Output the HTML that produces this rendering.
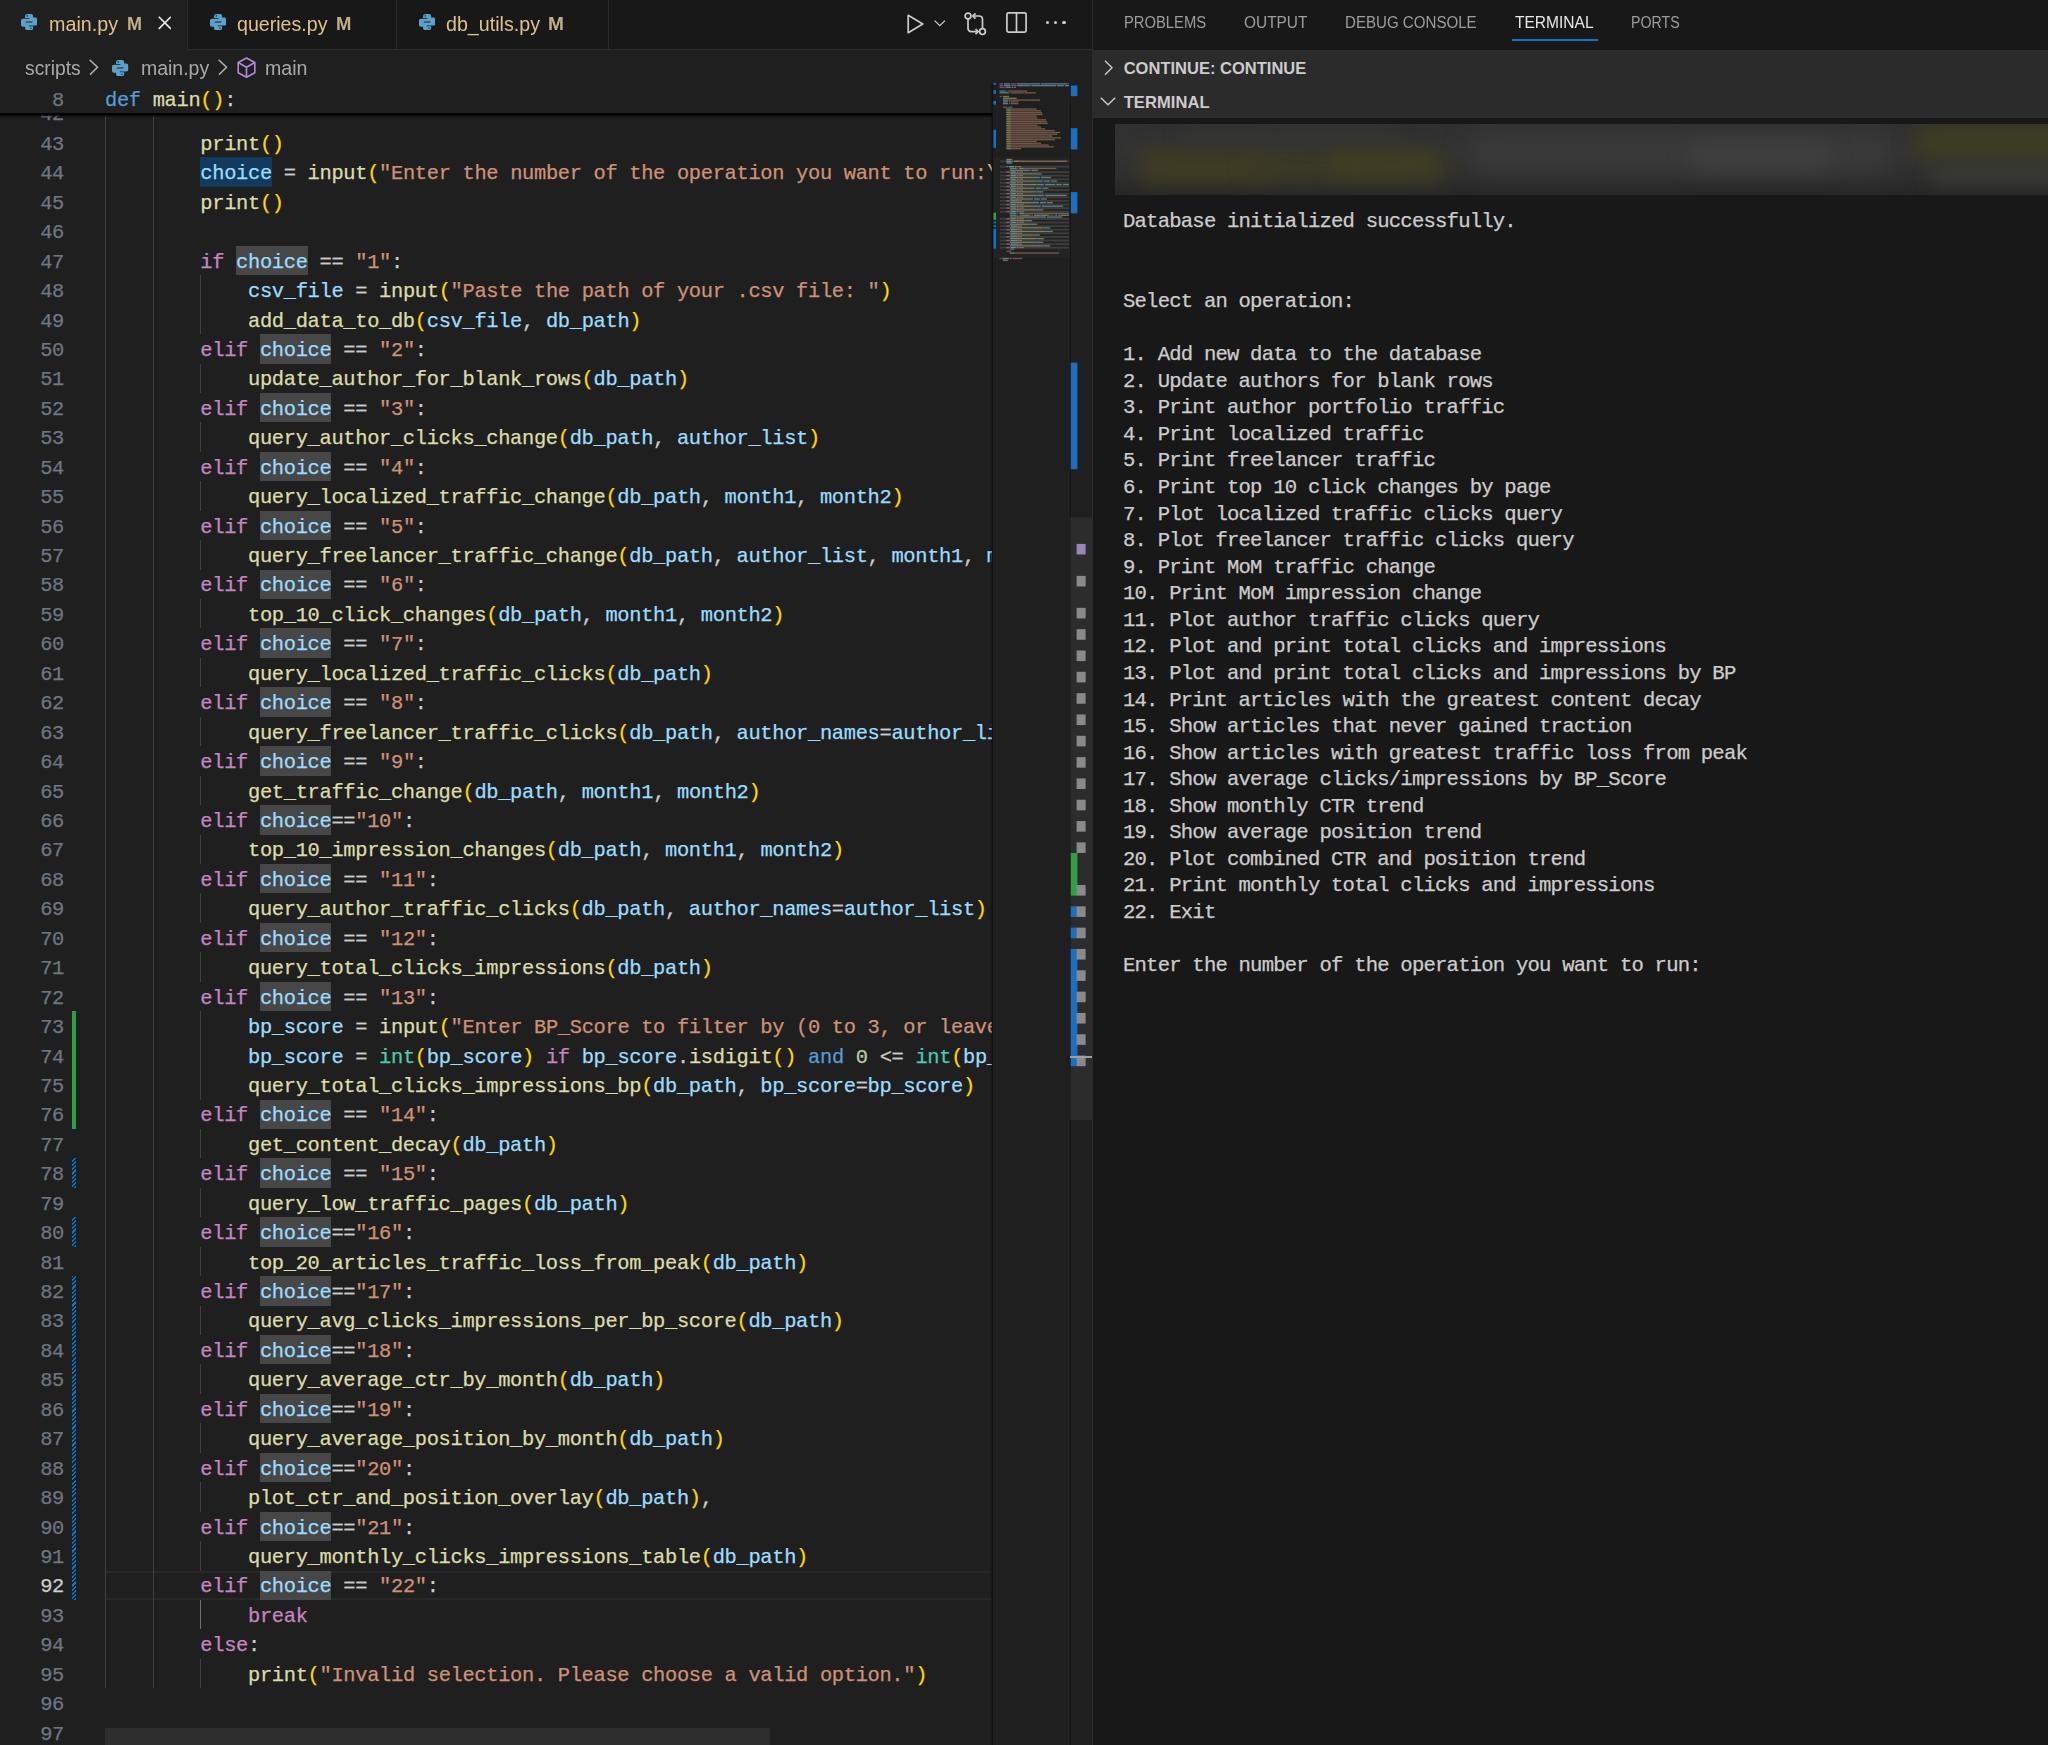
<!DOCTYPE html>
<html><head><meta charset="utf-8"><title>VS Code</title>
<style>html,body{margin:0;padding:0;background:#1f1f1f;}body{width:2048px;height:1745px;overflow:hidden;position:relative;font-family:'Liberation Sans',sans-serif;}.m{-webkit-text-stroke:0.25px currentColor}</style>
</head><body>
<div style="position:absolute;left:0.00px;top:0.00px;width:1092.00px;height:1745.00px;background:#1f1f1f;"></div>
<div style="position:absolute;left:0;top:84px;width:992px;height:1661px;overflow:hidden">
<div style="position:absolute;left:106.00px;top:1486.56px;width:886.00px;height:29.44px;background:transparent;box-sizing:border-box;border-top:2px solid #282828;border-bottom:2px solid #282828"></div>
<div style="position:absolute;left:200.36px;top:73.44px;width:71.52px;height:29.44px;background:#113a5c;"></div>
<div style="position:absolute;left:236.12px;top:161.76px;width:71.52px;height:29.44px;background:#474747;"></div>
<div style="position:absolute;left:259.96px;top:250.08px;width:71.52px;height:29.44px;background:#474747;"></div>
<div style="position:absolute;left:259.96px;top:308.96px;width:71.52px;height:29.44px;background:#474747;"></div>
<div style="position:absolute;left:259.96px;top:367.84px;width:71.52px;height:29.44px;background:#474747;"></div>
<div style="position:absolute;left:259.96px;top:426.72px;width:71.52px;height:29.44px;background:#474747;"></div>
<div style="position:absolute;left:259.96px;top:485.60px;width:71.52px;height:29.44px;background:#474747;"></div>
<div style="position:absolute;left:259.96px;top:544.48px;width:71.52px;height:29.44px;background:#474747;"></div>
<div style="position:absolute;left:259.96px;top:603.36px;width:71.52px;height:29.44px;background:#474747;"></div>
<div style="position:absolute;left:259.96px;top:662.24px;width:71.52px;height:29.44px;background:#474747;"></div>
<div style="position:absolute;left:259.96px;top:721.12px;width:71.52px;height:29.44px;background:#474747;"></div>
<div style="position:absolute;left:259.96px;top:780.00px;width:71.52px;height:29.44px;background:#474747;"></div>
<div style="position:absolute;left:259.96px;top:838.88px;width:71.52px;height:29.44px;background:#474747;"></div>
<div style="position:absolute;left:259.96px;top:897.76px;width:71.52px;height:29.44px;background:#474747;"></div>
<div style="position:absolute;left:259.96px;top:1015.52px;width:71.52px;height:29.44px;background:#474747;"></div>
<div style="position:absolute;left:259.96px;top:1074.40px;width:71.52px;height:29.44px;background:#474747;"></div>
<div style="position:absolute;left:259.96px;top:1133.28px;width:71.52px;height:29.44px;background:#474747;"></div>
<div style="position:absolute;left:259.96px;top:1192.16px;width:71.52px;height:29.44px;background:#474747;"></div>
<div style="position:absolute;left:259.96px;top:1251.04px;width:71.52px;height:29.44px;background:#474747;"></div>
<div style="position:absolute;left:259.96px;top:1309.92px;width:71.52px;height:29.44px;background:#474747;"></div>
<div style="position:absolute;left:259.96px;top:1368.80px;width:71.52px;height:29.44px;background:#474747;"></div>
<div style="position:absolute;left:259.96px;top:1427.68px;width:71.52px;height:29.44px;background:#474747;"></div>
<div style="position:absolute;left:259.96px;top:1486.56px;width:71.52px;height:29.44px;background:#474747;"></div>
<div style="position:absolute;left:105.00px;top:14.56px;width:1.00px;height:1589.76px;background:#404040;"></div>
<div style="position:absolute;left:152.68px;top:14.56px;width:1.00px;height:1589.76px;background:#404040;"></div>
<div style="position:absolute;left:200.36px;top:191.20px;width:1.00px;height:29.44px;background:#404040;"></div>
<div style="position:absolute;left:200.36px;top:220.64px;width:1.00px;height:29.44px;background:#404040;"></div>
<div style="position:absolute;left:200.36px;top:279.52px;width:1.00px;height:29.44px;background:#404040;"></div>
<div style="position:absolute;left:200.36px;top:338.40px;width:1.00px;height:29.44px;background:#404040;"></div>
<div style="position:absolute;left:200.36px;top:397.28px;width:1.00px;height:29.44px;background:#404040;"></div>
<div style="position:absolute;left:200.36px;top:456.16px;width:1.00px;height:29.44px;background:#404040;"></div>
<div style="position:absolute;left:200.36px;top:515.04px;width:1.00px;height:29.44px;background:#404040;"></div>
<div style="position:absolute;left:200.36px;top:573.92px;width:1.00px;height:29.44px;background:#404040;"></div>
<div style="position:absolute;left:200.36px;top:632.80px;width:1.00px;height:29.44px;background:#404040;"></div>
<div style="position:absolute;left:200.36px;top:691.68px;width:1.00px;height:29.44px;background:#404040;"></div>
<div style="position:absolute;left:200.36px;top:750.56px;width:1.00px;height:29.44px;background:#404040;"></div>
<div style="position:absolute;left:200.36px;top:809.44px;width:1.00px;height:29.44px;background:#404040;"></div>
<div style="position:absolute;left:200.36px;top:868.32px;width:1.00px;height:29.44px;background:#404040;"></div>
<div style="position:absolute;left:200.36px;top:927.20px;width:1.00px;height:29.44px;background:#404040;"></div>
<div style="position:absolute;left:200.36px;top:956.64px;width:1.00px;height:29.44px;background:#404040;"></div>
<div style="position:absolute;left:200.36px;top:986.08px;width:1.00px;height:29.44px;background:#404040;"></div>
<div style="position:absolute;left:200.36px;top:1044.96px;width:1.00px;height:29.44px;background:#404040;"></div>
<div style="position:absolute;left:200.36px;top:1103.84px;width:1.00px;height:29.44px;background:#404040;"></div>
<div style="position:absolute;left:200.36px;top:1162.72px;width:1.00px;height:29.44px;background:#404040;"></div>
<div style="position:absolute;left:200.36px;top:1221.60px;width:1.00px;height:29.44px;background:#404040;"></div>
<div style="position:absolute;left:200.36px;top:1280.48px;width:1.00px;height:29.44px;background:#404040;"></div>
<div style="position:absolute;left:200.36px;top:1339.36px;width:1.00px;height:29.44px;background:#404040;"></div>
<div style="position:absolute;left:200.36px;top:1398.24px;width:1.00px;height:29.44px;background:#404040;"></div>
<div style="position:absolute;left:200.36px;top:1457.12px;width:1.00px;height:29.44px;background:#404040;"></div>
<div style="position:absolute;left:200.36px;top:1516.00px;width:1.00px;height:29.44px;background:#707070;"></div>
<div style="position:absolute;left:200.36px;top:1574.88px;width:1.00px;height:29.44px;background:#404040;"></div>
<div class="m" style="position:absolute;left:0;width:64.00px;text-align:right;top:21.43px;font-family:'Liberation Mono';font-size:20.400px;line-height:20.400px;letter-spacing:-0.322px;color:#6e7681;white-space:pre">42</div>
<div class="m" style="position:absolute;left:0;width:64.00px;text-align:right;top:50.87px;font-family:'Liberation Mono';font-size:20.400px;line-height:20.400px;letter-spacing:-0.322px;color:#6e7681;white-space:pre">43</div>
<div class="m" style="position:absolute;left:105.00px;top:50.87px;font-family:'Liberation Mono';font-size:20.400px;line-height:20.400px;letter-spacing:-0.322px;color:#cccccc;white-space:pre">        <span style="color:#dcdcaa">print</span><span style="color:#ffd700">(</span><span style="color:#ffd700">)</span></div>
<div class="m" style="position:absolute;left:0;width:64.00px;text-align:right;top:80.31px;font-family:'Liberation Mono';font-size:20.400px;line-height:20.400px;letter-spacing:-0.322px;color:#6e7681;white-space:pre">44</div>
<div class="m" style="position:absolute;left:105.00px;top:80.31px;font-family:'Liberation Mono';font-size:20.400px;line-height:20.400px;letter-spacing:-0.322px;color:#cccccc;white-space:pre">        <span style="color:#9cdcfe">choice</span> <span style="color:#cccccc">=</span> <span style="color:#dcdcaa">input</span><span style="color:#ffd700">(</span><span style="color:#ce9178">&quot;Enter the number of the operation you want to run:</span><span style="color:#d7ba7d">\n</span><span style="color:#ce9178">&quot;</span><span style="color:#ffd700">)</span></div>
<div class="m" style="position:absolute;left:0;width:64.00px;text-align:right;top:109.75px;font-family:'Liberation Mono';font-size:20.400px;line-height:20.400px;letter-spacing:-0.322px;color:#6e7681;white-space:pre">45</div>
<div class="m" style="position:absolute;left:105.00px;top:109.75px;font-family:'Liberation Mono';font-size:20.400px;line-height:20.400px;letter-spacing:-0.322px;color:#cccccc;white-space:pre">        <span style="color:#dcdcaa">print</span><span style="color:#ffd700">(</span><span style="color:#ffd700">)</span></div>
<div class="m" style="position:absolute;left:0;width:64.00px;text-align:right;top:139.19px;font-family:'Liberation Mono';font-size:20.400px;line-height:20.400px;letter-spacing:-0.322px;color:#6e7681;white-space:pre">46</div>
<div class="m" style="position:absolute;left:0;width:64.00px;text-align:right;top:168.63px;font-family:'Liberation Mono';font-size:20.400px;line-height:20.400px;letter-spacing:-0.322px;color:#6e7681;white-space:pre">47</div>
<div class="m" style="position:absolute;left:105.00px;top:168.63px;font-family:'Liberation Mono';font-size:20.400px;line-height:20.400px;letter-spacing:-0.322px;color:#cccccc;white-space:pre">        <span style="color:#c586c0">if</span> <span style="color:#9cdcfe">choice</span> <span style="color:#cccccc">=</span><span style="color:#cccccc">=</span> <span style="color:#ce9178">&quot;1&quot;</span><span style="color:#cccccc">:</span></div>
<div class="m" style="position:absolute;left:0;width:64.00px;text-align:right;top:198.07px;font-family:'Liberation Mono';font-size:20.400px;line-height:20.400px;letter-spacing:-0.322px;color:#6e7681;white-space:pre">48</div>
<div class="m" style="position:absolute;left:105.00px;top:198.07px;font-family:'Liberation Mono';font-size:20.400px;line-height:20.400px;letter-spacing:-0.322px;color:#cccccc;white-space:pre">            <span style="color:#9cdcfe">csv_file</span> <span style="color:#cccccc">=</span> <span style="color:#dcdcaa">input</span><span style="color:#ffd700">(</span><span style="color:#ce9178">&quot;Paste the path of your .csv file: &quot;</span><span style="color:#ffd700">)</span></div>
<div class="m" style="position:absolute;left:0;width:64.00px;text-align:right;top:227.51px;font-family:'Liberation Mono';font-size:20.400px;line-height:20.400px;letter-spacing:-0.322px;color:#6e7681;white-space:pre">49</div>
<div class="m" style="position:absolute;left:105.00px;top:227.51px;font-family:'Liberation Mono';font-size:20.400px;line-height:20.400px;letter-spacing:-0.322px;color:#cccccc;white-space:pre">            <span style="color:#dcdcaa">add_data_to_db</span><span style="color:#ffd700">(</span><span style="color:#9cdcfe">csv_file</span><span style="color:#cccccc">,</span> <span style="color:#9cdcfe">db_path</span><span style="color:#ffd700">)</span></div>
<div class="m" style="position:absolute;left:0;width:64.00px;text-align:right;top:256.95px;font-family:'Liberation Mono';font-size:20.400px;line-height:20.400px;letter-spacing:-0.322px;color:#6e7681;white-space:pre">50</div>
<div class="m" style="position:absolute;left:105.00px;top:256.95px;font-family:'Liberation Mono';font-size:20.400px;line-height:20.400px;letter-spacing:-0.322px;color:#cccccc;white-space:pre">        <span style="color:#c586c0">elif</span> <span style="color:#9cdcfe">choice</span> <span style="color:#cccccc">=</span><span style="color:#cccccc">=</span> <span style="color:#ce9178">&quot;2&quot;</span><span style="color:#cccccc">:</span></div>
<div class="m" style="position:absolute;left:0;width:64.00px;text-align:right;top:286.39px;font-family:'Liberation Mono';font-size:20.400px;line-height:20.400px;letter-spacing:-0.322px;color:#6e7681;white-space:pre">51</div>
<div class="m" style="position:absolute;left:105.00px;top:286.39px;font-family:'Liberation Mono';font-size:20.400px;line-height:20.400px;letter-spacing:-0.322px;color:#cccccc;white-space:pre">            <span style="color:#dcdcaa">update_author_for_blank_rows</span><span style="color:#ffd700">(</span><span style="color:#9cdcfe">db_path</span><span style="color:#ffd700">)</span></div>
<div class="m" style="position:absolute;left:0;width:64.00px;text-align:right;top:315.83px;font-family:'Liberation Mono';font-size:20.400px;line-height:20.400px;letter-spacing:-0.322px;color:#6e7681;white-space:pre">52</div>
<div class="m" style="position:absolute;left:105.00px;top:315.83px;font-family:'Liberation Mono';font-size:20.400px;line-height:20.400px;letter-spacing:-0.322px;color:#cccccc;white-space:pre">        <span style="color:#c586c0">elif</span> <span style="color:#9cdcfe">choice</span> <span style="color:#cccccc">=</span><span style="color:#cccccc">=</span> <span style="color:#ce9178">&quot;3&quot;</span><span style="color:#cccccc">:</span></div>
<div class="m" style="position:absolute;left:0;width:64.00px;text-align:right;top:345.27px;font-family:'Liberation Mono';font-size:20.400px;line-height:20.400px;letter-spacing:-0.322px;color:#6e7681;white-space:pre">53</div>
<div class="m" style="position:absolute;left:105.00px;top:345.27px;font-family:'Liberation Mono';font-size:20.400px;line-height:20.400px;letter-spacing:-0.322px;color:#cccccc;white-space:pre">            <span style="color:#dcdcaa">query_author_clicks_change</span><span style="color:#ffd700">(</span><span style="color:#9cdcfe">db_path</span><span style="color:#cccccc">,</span> <span style="color:#9cdcfe">author_list</span><span style="color:#ffd700">)</span></div>
<div class="m" style="position:absolute;left:0;width:64.00px;text-align:right;top:374.71px;font-family:'Liberation Mono';font-size:20.400px;line-height:20.400px;letter-spacing:-0.322px;color:#6e7681;white-space:pre">54</div>
<div class="m" style="position:absolute;left:105.00px;top:374.71px;font-family:'Liberation Mono';font-size:20.400px;line-height:20.400px;letter-spacing:-0.322px;color:#cccccc;white-space:pre">        <span style="color:#c586c0">elif</span> <span style="color:#9cdcfe">choice</span> <span style="color:#cccccc">=</span><span style="color:#cccccc">=</span> <span style="color:#ce9178">&quot;4&quot;</span><span style="color:#cccccc">:</span></div>
<div class="m" style="position:absolute;left:0;width:64.00px;text-align:right;top:404.15px;font-family:'Liberation Mono';font-size:20.400px;line-height:20.400px;letter-spacing:-0.322px;color:#6e7681;white-space:pre">55</div>
<div class="m" style="position:absolute;left:105.00px;top:404.15px;font-family:'Liberation Mono';font-size:20.400px;line-height:20.400px;letter-spacing:-0.322px;color:#cccccc;white-space:pre">            <span style="color:#dcdcaa">query_localized_traffic_change</span><span style="color:#ffd700">(</span><span style="color:#9cdcfe">db_path</span><span style="color:#cccccc">,</span> <span style="color:#9cdcfe">month1</span><span style="color:#cccccc">,</span> <span style="color:#9cdcfe">month2</span><span style="color:#ffd700">)</span></div>
<div class="m" style="position:absolute;left:0;width:64.00px;text-align:right;top:433.59px;font-family:'Liberation Mono';font-size:20.400px;line-height:20.400px;letter-spacing:-0.322px;color:#6e7681;white-space:pre">56</div>
<div class="m" style="position:absolute;left:105.00px;top:433.59px;font-family:'Liberation Mono';font-size:20.400px;line-height:20.400px;letter-spacing:-0.322px;color:#cccccc;white-space:pre">        <span style="color:#c586c0">elif</span> <span style="color:#9cdcfe">choice</span> <span style="color:#cccccc">=</span><span style="color:#cccccc">=</span> <span style="color:#ce9178">&quot;5&quot;</span><span style="color:#cccccc">:</span></div>
<div class="m" style="position:absolute;left:0;width:64.00px;text-align:right;top:463.03px;font-family:'Liberation Mono';font-size:20.400px;line-height:20.400px;letter-spacing:-0.322px;color:#6e7681;white-space:pre">57</div>
<div class="m" style="position:absolute;left:105.00px;top:463.03px;font-family:'Liberation Mono';font-size:20.400px;line-height:20.400px;letter-spacing:-0.322px;color:#cccccc;white-space:pre">            <span style="color:#dcdcaa">query_freelancer_traffic_change</span><span style="color:#ffd700">(</span><span style="color:#9cdcfe">db_path</span><span style="color:#cccccc">,</span> <span style="color:#9cdcfe">author_list</span><span style="color:#cccccc">,</span> <span style="color:#9cdcfe">month1</span><span style="color:#cccccc">,</span> <span style="color:#9cdcfe">month2</span><span style="color:#ffd700">)</span></div>
<div class="m" style="position:absolute;left:0;width:64.00px;text-align:right;top:492.47px;font-family:'Liberation Mono';font-size:20.400px;line-height:20.400px;letter-spacing:-0.322px;color:#6e7681;white-space:pre">58</div>
<div class="m" style="position:absolute;left:105.00px;top:492.47px;font-family:'Liberation Mono';font-size:20.400px;line-height:20.400px;letter-spacing:-0.322px;color:#cccccc;white-space:pre">        <span style="color:#c586c0">elif</span> <span style="color:#9cdcfe">choice</span> <span style="color:#cccccc">=</span><span style="color:#cccccc">=</span> <span style="color:#ce9178">&quot;6&quot;</span><span style="color:#cccccc">:</span></div>
<div class="m" style="position:absolute;left:0;width:64.00px;text-align:right;top:521.91px;font-family:'Liberation Mono';font-size:20.400px;line-height:20.400px;letter-spacing:-0.322px;color:#6e7681;white-space:pre">59</div>
<div class="m" style="position:absolute;left:105.00px;top:521.91px;font-family:'Liberation Mono';font-size:20.400px;line-height:20.400px;letter-spacing:-0.322px;color:#cccccc;white-space:pre">            <span style="color:#dcdcaa">top_10_click_changes</span><span style="color:#ffd700">(</span><span style="color:#9cdcfe">db_path</span><span style="color:#cccccc">,</span> <span style="color:#9cdcfe">month1</span><span style="color:#cccccc">,</span> <span style="color:#9cdcfe">month2</span><span style="color:#ffd700">)</span></div>
<div class="m" style="position:absolute;left:0;width:64.00px;text-align:right;top:551.35px;font-family:'Liberation Mono';font-size:20.400px;line-height:20.400px;letter-spacing:-0.322px;color:#6e7681;white-space:pre">60</div>
<div class="m" style="position:absolute;left:105.00px;top:551.35px;font-family:'Liberation Mono';font-size:20.400px;line-height:20.400px;letter-spacing:-0.322px;color:#cccccc;white-space:pre">        <span style="color:#c586c0">elif</span> <span style="color:#9cdcfe">choice</span> <span style="color:#cccccc">=</span><span style="color:#cccccc">=</span> <span style="color:#ce9178">&quot;7&quot;</span><span style="color:#cccccc">:</span></div>
<div class="m" style="position:absolute;left:0;width:64.00px;text-align:right;top:580.79px;font-family:'Liberation Mono';font-size:20.400px;line-height:20.400px;letter-spacing:-0.322px;color:#6e7681;white-space:pre">61</div>
<div class="m" style="position:absolute;left:105.00px;top:580.79px;font-family:'Liberation Mono';font-size:20.400px;line-height:20.400px;letter-spacing:-0.322px;color:#cccccc;white-space:pre">            <span style="color:#dcdcaa">query_localized_traffic_clicks</span><span style="color:#ffd700">(</span><span style="color:#9cdcfe">db_path</span><span style="color:#ffd700">)</span></div>
<div class="m" style="position:absolute;left:0;width:64.00px;text-align:right;top:610.23px;font-family:'Liberation Mono';font-size:20.400px;line-height:20.400px;letter-spacing:-0.322px;color:#6e7681;white-space:pre">62</div>
<div class="m" style="position:absolute;left:105.00px;top:610.23px;font-family:'Liberation Mono';font-size:20.400px;line-height:20.400px;letter-spacing:-0.322px;color:#cccccc;white-space:pre">        <span style="color:#c586c0">elif</span> <span style="color:#9cdcfe">choice</span> <span style="color:#cccccc">=</span><span style="color:#cccccc">=</span> <span style="color:#ce9178">&quot;8&quot;</span><span style="color:#cccccc">:</span></div>
<div class="m" style="position:absolute;left:0;width:64.00px;text-align:right;top:639.67px;font-family:'Liberation Mono';font-size:20.400px;line-height:20.400px;letter-spacing:-0.322px;color:#6e7681;white-space:pre">63</div>
<div class="m" style="position:absolute;left:105.00px;top:639.67px;font-family:'Liberation Mono';font-size:20.400px;line-height:20.400px;letter-spacing:-0.322px;color:#cccccc;white-space:pre">            <span style="color:#dcdcaa">query_freelancer_traffic_clicks</span><span style="color:#ffd700">(</span><span style="color:#9cdcfe">db_path</span><span style="color:#cccccc">,</span> <span style="color:#9cdcfe">author_names</span><span style="color:#cccccc">=</span><span style="color:#9cdcfe">author_list</span><span style="color:#ffd700">)</span></div>
<div class="m" style="position:absolute;left:0;width:64.00px;text-align:right;top:669.11px;font-family:'Liberation Mono';font-size:20.400px;line-height:20.400px;letter-spacing:-0.322px;color:#6e7681;white-space:pre">64</div>
<div class="m" style="position:absolute;left:105.00px;top:669.11px;font-family:'Liberation Mono';font-size:20.400px;line-height:20.400px;letter-spacing:-0.322px;color:#cccccc;white-space:pre">        <span style="color:#c586c0">elif</span> <span style="color:#9cdcfe">choice</span> <span style="color:#cccccc">=</span><span style="color:#cccccc">=</span> <span style="color:#ce9178">&quot;9&quot;</span><span style="color:#cccccc">:</span></div>
<div class="m" style="position:absolute;left:0;width:64.00px;text-align:right;top:698.55px;font-family:'Liberation Mono';font-size:20.400px;line-height:20.400px;letter-spacing:-0.322px;color:#6e7681;white-space:pre">65</div>
<div class="m" style="position:absolute;left:105.00px;top:698.55px;font-family:'Liberation Mono';font-size:20.400px;line-height:20.400px;letter-spacing:-0.322px;color:#cccccc;white-space:pre">            <span style="color:#dcdcaa">get_traffic_change</span><span style="color:#ffd700">(</span><span style="color:#9cdcfe">db_path</span><span style="color:#cccccc">,</span> <span style="color:#9cdcfe">month1</span><span style="color:#cccccc">,</span> <span style="color:#9cdcfe">month2</span><span style="color:#ffd700">)</span></div>
<div class="m" style="position:absolute;left:0;width:64.00px;text-align:right;top:727.99px;font-family:'Liberation Mono';font-size:20.400px;line-height:20.400px;letter-spacing:-0.322px;color:#6e7681;white-space:pre">66</div>
<div class="m" style="position:absolute;left:105.00px;top:727.99px;font-family:'Liberation Mono';font-size:20.400px;line-height:20.400px;letter-spacing:-0.322px;color:#cccccc;white-space:pre">        <span style="color:#c586c0">elif</span> <span style="color:#9cdcfe">choice</span><span style="color:#cccccc">=</span><span style="color:#cccccc">=</span><span style="color:#ce9178">&quot;10&quot;</span><span style="color:#cccccc">:</span></div>
<div class="m" style="position:absolute;left:0;width:64.00px;text-align:right;top:757.43px;font-family:'Liberation Mono';font-size:20.400px;line-height:20.400px;letter-spacing:-0.322px;color:#6e7681;white-space:pre">67</div>
<div class="m" style="position:absolute;left:105.00px;top:757.43px;font-family:'Liberation Mono';font-size:20.400px;line-height:20.400px;letter-spacing:-0.322px;color:#cccccc;white-space:pre">            <span style="color:#dcdcaa">top_10_impression_changes</span><span style="color:#ffd700">(</span><span style="color:#9cdcfe">db_path</span><span style="color:#cccccc">,</span> <span style="color:#9cdcfe">month1</span><span style="color:#cccccc">,</span> <span style="color:#9cdcfe">month2</span><span style="color:#ffd700">)</span></div>
<div class="m" style="position:absolute;left:0;width:64.00px;text-align:right;top:786.87px;font-family:'Liberation Mono';font-size:20.400px;line-height:20.400px;letter-spacing:-0.322px;color:#6e7681;white-space:pre">68</div>
<div class="m" style="position:absolute;left:105.00px;top:786.87px;font-family:'Liberation Mono';font-size:20.400px;line-height:20.400px;letter-spacing:-0.322px;color:#cccccc;white-space:pre">        <span style="color:#c586c0">elif</span> <span style="color:#9cdcfe">choice</span> <span style="color:#cccccc">=</span><span style="color:#cccccc">=</span> <span style="color:#ce9178">&quot;11&quot;</span><span style="color:#cccccc">:</span></div>
<div class="m" style="position:absolute;left:0;width:64.00px;text-align:right;top:816.31px;font-family:'Liberation Mono';font-size:20.400px;line-height:20.400px;letter-spacing:-0.322px;color:#6e7681;white-space:pre">69</div>
<div class="m" style="position:absolute;left:105.00px;top:816.31px;font-family:'Liberation Mono';font-size:20.400px;line-height:20.400px;letter-spacing:-0.322px;color:#cccccc;white-space:pre">            <span style="color:#dcdcaa">query_author_traffic_clicks</span><span style="color:#ffd700">(</span><span style="color:#9cdcfe">db_path</span><span style="color:#cccccc">,</span> <span style="color:#9cdcfe">author_names</span><span style="color:#cccccc">=</span><span style="color:#9cdcfe">author_list</span><span style="color:#ffd700">)</span></div>
<div class="m" style="position:absolute;left:0;width:64.00px;text-align:right;top:845.75px;font-family:'Liberation Mono';font-size:20.400px;line-height:20.400px;letter-spacing:-0.322px;color:#6e7681;white-space:pre">70</div>
<div class="m" style="position:absolute;left:105.00px;top:845.75px;font-family:'Liberation Mono';font-size:20.400px;line-height:20.400px;letter-spacing:-0.322px;color:#cccccc;white-space:pre">        <span style="color:#c586c0">elif</span> <span style="color:#9cdcfe">choice</span> <span style="color:#cccccc">=</span><span style="color:#cccccc">=</span> <span style="color:#ce9178">&quot;12&quot;</span><span style="color:#cccccc">:</span></div>
<div class="m" style="position:absolute;left:0;width:64.00px;text-align:right;top:875.19px;font-family:'Liberation Mono';font-size:20.400px;line-height:20.400px;letter-spacing:-0.322px;color:#6e7681;white-space:pre">71</div>
<div class="m" style="position:absolute;left:105.00px;top:875.19px;font-family:'Liberation Mono';font-size:20.400px;line-height:20.400px;letter-spacing:-0.322px;color:#cccccc;white-space:pre">            <span style="color:#dcdcaa">query_total_clicks_impressions</span><span style="color:#ffd700">(</span><span style="color:#9cdcfe">db_path</span><span style="color:#ffd700">)</span></div>
<div class="m" style="position:absolute;left:0;width:64.00px;text-align:right;top:904.63px;font-family:'Liberation Mono';font-size:20.400px;line-height:20.400px;letter-spacing:-0.322px;color:#6e7681;white-space:pre">72</div>
<div class="m" style="position:absolute;left:105.00px;top:904.63px;font-family:'Liberation Mono';font-size:20.400px;line-height:20.400px;letter-spacing:-0.322px;color:#cccccc;white-space:pre">        <span style="color:#c586c0">elif</span> <span style="color:#9cdcfe">choice</span> <span style="color:#cccccc">=</span><span style="color:#cccccc">=</span> <span style="color:#ce9178">&quot;13&quot;</span><span style="color:#cccccc">:</span></div>
<div class="m" style="position:absolute;left:0;width:64.00px;text-align:right;top:934.07px;font-family:'Liberation Mono';font-size:20.400px;line-height:20.400px;letter-spacing:-0.322px;color:#6e7681;white-space:pre">73</div>
<div class="m" style="position:absolute;left:105.00px;top:934.07px;font-family:'Liberation Mono';font-size:20.400px;line-height:20.400px;letter-spacing:-0.322px;color:#cccccc;white-space:pre">            <span style="color:#9cdcfe">bp_score</span> <span style="color:#cccccc">=</span> <span style="color:#dcdcaa">input</span><span style="color:#ffd700">(</span><span style="color:#ce9178">&quot;Enter BP_Score to filter by (0 to 3, or leave blank for all): &quot;</span><span style="color:#ffd700">)</span></div>
<div class="m" style="position:absolute;left:0;width:64.00px;text-align:right;top:963.51px;font-family:'Liberation Mono';font-size:20.400px;line-height:20.400px;letter-spacing:-0.322px;color:#6e7681;white-space:pre">74</div>
<div class="m" style="position:absolute;left:105.00px;top:963.51px;font-family:'Liberation Mono';font-size:20.400px;line-height:20.400px;letter-spacing:-0.322px;color:#cccccc;white-space:pre">            <span style="color:#9cdcfe">bp_score</span> <span style="color:#cccccc">=</span> <span style="color:#4ec9b0">int</span><span style="color:#ffd700">(</span><span style="color:#9cdcfe">bp_score</span><span style="color:#ffd700">)</span> <span style="color:#c586c0">if</span> <span style="color:#9cdcfe">bp_score</span><span style="color:#cccccc">.</span><span style="color:#dcdcaa">isdigit</span><span style="color:#ffd700">(</span><span style="color:#ffd700">)</span> <span style="color:#569cd6">and</span> <span style="color:#b5cea8">0</span> <span style="color:#cccccc">&lt;</span><span style="color:#cccccc">=</span> <span style="color:#4ec9b0">int</span><span style="color:#ffd700">(</span><span style="color:#9cdcfe">bp_score</span><span style="color:#ffd700">)</span> <span style="color:#cccccc">&lt;</span><span style="color:#cccccc">=</span> <span style="color:#b5cea8">3</span> <span style="color:#c586c0">else</span> <span style="color:#569cd6">None</span></div>
<div class="m" style="position:absolute;left:0;width:64.00px;text-align:right;top:992.95px;font-family:'Liberation Mono';font-size:20.400px;line-height:20.400px;letter-spacing:-0.322px;color:#6e7681;white-space:pre">75</div>
<div class="m" style="position:absolute;left:105.00px;top:992.95px;font-family:'Liberation Mono';font-size:20.400px;line-height:20.400px;letter-spacing:-0.322px;color:#cccccc;white-space:pre">            <span style="color:#dcdcaa">query_total_clicks_impressions_bp</span><span style="color:#ffd700">(</span><span style="color:#9cdcfe">db_path</span><span style="color:#cccccc">,</span> <span style="color:#9cdcfe">bp_score</span><span style="color:#cccccc">=</span><span style="color:#9cdcfe">bp_score</span><span style="color:#ffd700">)</span></div>
<div class="m" style="position:absolute;left:0;width:64.00px;text-align:right;top:1022.39px;font-family:'Liberation Mono';font-size:20.400px;line-height:20.400px;letter-spacing:-0.322px;color:#6e7681;white-space:pre">76</div>
<div class="m" style="position:absolute;left:105.00px;top:1022.39px;font-family:'Liberation Mono';font-size:20.400px;line-height:20.400px;letter-spacing:-0.322px;color:#cccccc;white-space:pre">        <span style="color:#c586c0">elif</span> <span style="color:#9cdcfe">choice</span> <span style="color:#cccccc">=</span><span style="color:#cccccc">=</span> <span style="color:#ce9178">&quot;14&quot;</span><span style="color:#cccccc">:</span></div>
<div class="m" style="position:absolute;left:0;width:64.00px;text-align:right;top:1051.83px;font-family:'Liberation Mono';font-size:20.400px;line-height:20.400px;letter-spacing:-0.322px;color:#6e7681;white-space:pre">77</div>
<div class="m" style="position:absolute;left:105.00px;top:1051.83px;font-family:'Liberation Mono';font-size:20.400px;line-height:20.400px;letter-spacing:-0.322px;color:#cccccc;white-space:pre">            <span style="color:#dcdcaa">get_content_decay</span><span style="color:#ffd700">(</span><span style="color:#9cdcfe">db_path</span><span style="color:#ffd700">)</span></div>
<div class="m" style="position:absolute;left:0;width:64.00px;text-align:right;top:1081.27px;font-family:'Liberation Mono';font-size:20.400px;line-height:20.400px;letter-spacing:-0.322px;color:#6e7681;white-space:pre">78</div>
<div class="m" style="position:absolute;left:105.00px;top:1081.27px;font-family:'Liberation Mono';font-size:20.400px;line-height:20.400px;letter-spacing:-0.322px;color:#cccccc;white-space:pre">        <span style="color:#c586c0">elif</span> <span style="color:#9cdcfe">choice</span> <span style="color:#cccccc">=</span><span style="color:#cccccc">=</span> <span style="color:#ce9178">&quot;15&quot;</span><span style="color:#cccccc">:</span></div>
<div class="m" style="position:absolute;left:0;width:64.00px;text-align:right;top:1110.71px;font-family:'Liberation Mono';font-size:20.400px;line-height:20.400px;letter-spacing:-0.322px;color:#6e7681;white-space:pre">79</div>
<div class="m" style="position:absolute;left:105.00px;top:1110.71px;font-family:'Liberation Mono';font-size:20.400px;line-height:20.400px;letter-spacing:-0.322px;color:#cccccc;white-space:pre">            <span style="color:#dcdcaa">query_low_traffic_pages</span><span style="color:#ffd700">(</span><span style="color:#9cdcfe">db_path</span><span style="color:#ffd700">)</span></div>
<div class="m" style="position:absolute;left:0;width:64.00px;text-align:right;top:1140.15px;font-family:'Liberation Mono';font-size:20.400px;line-height:20.400px;letter-spacing:-0.322px;color:#6e7681;white-space:pre">80</div>
<div class="m" style="position:absolute;left:105.00px;top:1140.15px;font-family:'Liberation Mono';font-size:20.400px;line-height:20.400px;letter-spacing:-0.322px;color:#cccccc;white-space:pre">        <span style="color:#c586c0">elif</span> <span style="color:#9cdcfe">choice</span><span style="color:#cccccc">=</span><span style="color:#cccccc">=</span><span style="color:#ce9178">&quot;16&quot;</span><span style="color:#cccccc">:</span></div>
<div class="m" style="position:absolute;left:0;width:64.00px;text-align:right;top:1169.59px;font-family:'Liberation Mono';font-size:20.400px;line-height:20.400px;letter-spacing:-0.322px;color:#6e7681;white-space:pre">81</div>
<div class="m" style="position:absolute;left:105.00px;top:1169.59px;font-family:'Liberation Mono';font-size:20.400px;line-height:20.400px;letter-spacing:-0.322px;color:#cccccc;white-space:pre">            <span style="color:#dcdcaa">top_20_articles_traffic_loss_from_peak</span><span style="color:#ffd700">(</span><span style="color:#9cdcfe">db_path</span><span style="color:#ffd700">)</span></div>
<div class="m" style="position:absolute;left:0;width:64.00px;text-align:right;top:1199.03px;font-family:'Liberation Mono';font-size:20.400px;line-height:20.400px;letter-spacing:-0.322px;color:#6e7681;white-space:pre">82</div>
<div class="m" style="position:absolute;left:105.00px;top:1199.03px;font-family:'Liberation Mono';font-size:20.400px;line-height:20.400px;letter-spacing:-0.322px;color:#cccccc;white-space:pre">        <span style="color:#c586c0">elif</span> <span style="color:#9cdcfe">choice</span><span style="color:#cccccc">=</span><span style="color:#cccccc">=</span><span style="color:#ce9178">&quot;17&quot;</span><span style="color:#cccccc">:</span></div>
<div class="m" style="position:absolute;left:0;width:64.00px;text-align:right;top:1228.47px;font-family:'Liberation Mono';font-size:20.400px;line-height:20.400px;letter-spacing:-0.322px;color:#6e7681;white-space:pre">83</div>
<div class="m" style="position:absolute;left:105.00px;top:1228.47px;font-family:'Liberation Mono';font-size:20.400px;line-height:20.400px;letter-spacing:-0.322px;color:#cccccc;white-space:pre">            <span style="color:#dcdcaa">query_avg_clicks_impressions_per_bp_score</span><span style="color:#ffd700">(</span><span style="color:#9cdcfe">db_path</span><span style="color:#ffd700">)</span></div>
<div class="m" style="position:absolute;left:0;width:64.00px;text-align:right;top:1257.91px;font-family:'Liberation Mono';font-size:20.400px;line-height:20.400px;letter-spacing:-0.322px;color:#6e7681;white-space:pre">84</div>
<div class="m" style="position:absolute;left:105.00px;top:1257.91px;font-family:'Liberation Mono';font-size:20.400px;line-height:20.400px;letter-spacing:-0.322px;color:#cccccc;white-space:pre">        <span style="color:#c586c0">elif</span> <span style="color:#9cdcfe">choice</span><span style="color:#cccccc">=</span><span style="color:#cccccc">=</span><span style="color:#ce9178">&quot;18&quot;</span><span style="color:#cccccc">:</span></div>
<div class="m" style="position:absolute;left:0;width:64.00px;text-align:right;top:1287.35px;font-family:'Liberation Mono';font-size:20.400px;line-height:20.400px;letter-spacing:-0.322px;color:#6e7681;white-space:pre">85</div>
<div class="m" style="position:absolute;left:105.00px;top:1287.35px;font-family:'Liberation Mono';font-size:20.400px;line-height:20.400px;letter-spacing:-0.322px;color:#cccccc;white-space:pre">            <span style="color:#dcdcaa">query_average_ctr_by_month</span><span style="color:#ffd700">(</span><span style="color:#9cdcfe">db_path</span><span style="color:#ffd700">)</span></div>
<div class="m" style="position:absolute;left:0;width:64.00px;text-align:right;top:1316.79px;font-family:'Liberation Mono';font-size:20.400px;line-height:20.400px;letter-spacing:-0.322px;color:#6e7681;white-space:pre">86</div>
<div class="m" style="position:absolute;left:105.00px;top:1316.79px;font-family:'Liberation Mono';font-size:20.400px;line-height:20.400px;letter-spacing:-0.322px;color:#cccccc;white-space:pre">        <span style="color:#c586c0">elif</span> <span style="color:#9cdcfe">choice</span><span style="color:#cccccc">=</span><span style="color:#cccccc">=</span><span style="color:#ce9178">&quot;19&quot;</span><span style="color:#cccccc">:</span></div>
<div class="m" style="position:absolute;left:0;width:64.00px;text-align:right;top:1346.23px;font-family:'Liberation Mono';font-size:20.400px;line-height:20.400px;letter-spacing:-0.322px;color:#6e7681;white-space:pre">87</div>
<div class="m" style="position:absolute;left:105.00px;top:1346.23px;font-family:'Liberation Mono';font-size:20.400px;line-height:20.400px;letter-spacing:-0.322px;color:#cccccc;white-space:pre">            <span style="color:#dcdcaa">query_average_position_by_month</span><span style="color:#ffd700">(</span><span style="color:#9cdcfe">db_path</span><span style="color:#ffd700">)</span></div>
<div class="m" style="position:absolute;left:0;width:64.00px;text-align:right;top:1375.67px;font-family:'Liberation Mono';font-size:20.400px;line-height:20.400px;letter-spacing:-0.322px;color:#6e7681;white-space:pre">88</div>
<div class="m" style="position:absolute;left:105.00px;top:1375.67px;font-family:'Liberation Mono';font-size:20.400px;line-height:20.400px;letter-spacing:-0.322px;color:#cccccc;white-space:pre">        <span style="color:#c586c0">elif</span> <span style="color:#9cdcfe">choice</span><span style="color:#cccccc">=</span><span style="color:#cccccc">=</span><span style="color:#ce9178">&quot;20&quot;</span><span style="color:#cccccc">:</span></div>
<div class="m" style="position:absolute;left:0;width:64.00px;text-align:right;top:1405.11px;font-family:'Liberation Mono';font-size:20.400px;line-height:20.400px;letter-spacing:-0.322px;color:#6e7681;white-space:pre">89</div>
<div class="m" style="position:absolute;left:105.00px;top:1405.11px;font-family:'Liberation Mono';font-size:20.400px;line-height:20.400px;letter-spacing:-0.322px;color:#cccccc;white-space:pre">            <span style="color:#dcdcaa">plot_ctr_and_position_overlay</span><span style="color:#ffd700">(</span><span style="color:#9cdcfe">db_path</span><span style="color:#ffd700">)</span><span style="color:#cccccc">,</span></div>
<div class="m" style="position:absolute;left:0;width:64.00px;text-align:right;top:1434.55px;font-family:'Liberation Mono';font-size:20.400px;line-height:20.400px;letter-spacing:-0.322px;color:#6e7681;white-space:pre">90</div>
<div class="m" style="position:absolute;left:105.00px;top:1434.55px;font-family:'Liberation Mono';font-size:20.400px;line-height:20.400px;letter-spacing:-0.322px;color:#cccccc;white-space:pre">        <span style="color:#c586c0">elif</span> <span style="color:#9cdcfe">choice</span><span style="color:#cccccc">=</span><span style="color:#cccccc">=</span><span style="color:#ce9178">&quot;21&quot;</span><span style="color:#cccccc">:</span></div>
<div class="m" style="position:absolute;left:0;width:64.00px;text-align:right;top:1463.99px;font-family:'Liberation Mono';font-size:20.400px;line-height:20.400px;letter-spacing:-0.322px;color:#6e7681;white-space:pre">91</div>
<div class="m" style="position:absolute;left:105.00px;top:1463.99px;font-family:'Liberation Mono';font-size:20.400px;line-height:20.400px;letter-spacing:-0.322px;color:#cccccc;white-space:pre">            <span style="color:#dcdcaa">query_monthly_clicks_impressions_table</span><span style="color:#ffd700">(</span><span style="color:#9cdcfe">db_path</span><span style="color:#ffd700">)</span></div>
<div class="m" style="position:absolute;left:0;width:64.00px;text-align:right;top:1493.43px;font-family:'Liberation Mono';font-size:20.400px;line-height:20.400px;letter-spacing:-0.322px;color:#cccccc;white-space:pre">92</div>
<div class="m" style="position:absolute;left:105.00px;top:1493.43px;font-family:'Liberation Mono';font-size:20.400px;line-height:20.400px;letter-spacing:-0.322px;color:#cccccc;white-space:pre">        <span style="color:#c586c0">elif</span> <span style="color:#9cdcfe">choice</span> <span style="color:#cccccc">=</span><span style="color:#cccccc">=</span> <span style="color:#ce9178">&quot;22&quot;</span><span style="color:#cccccc">:</span></div>
<div class="m" style="position:absolute;left:0;width:64.00px;text-align:right;top:1522.87px;font-family:'Liberation Mono';font-size:20.400px;line-height:20.400px;letter-spacing:-0.322px;color:#6e7681;white-space:pre">93</div>
<div class="m" style="position:absolute;left:105.00px;top:1522.87px;font-family:'Liberation Mono';font-size:20.400px;line-height:20.400px;letter-spacing:-0.322px;color:#cccccc;white-space:pre">            <span style="color:#c586c0">break</span></div>
<div class="m" style="position:absolute;left:0;width:64.00px;text-align:right;top:1552.31px;font-family:'Liberation Mono';font-size:20.400px;line-height:20.400px;letter-spacing:-0.322px;color:#6e7681;white-space:pre">94</div>
<div class="m" style="position:absolute;left:105.00px;top:1552.31px;font-family:'Liberation Mono';font-size:20.400px;line-height:20.400px;letter-spacing:-0.322px;color:#cccccc;white-space:pre">        <span style="color:#c586c0">else</span><span style="color:#cccccc">:</span></div>
<div class="m" style="position:absolute;left:0;width:64.00px;text-align:right;top:1581.75px;font-family:'Liberation Mono';font-size:20.400px;line-height:20.400px;letter-spacing:-0.322px;color:#6e7681;white-space:pre">95</div>
<div class="m" style="position:absolute;left:105.00px;top:1581.75px;font-family:'Liberation Mono';font-size:20.400px;line-height:20.400px;letter-spacing:-0.322px;color:#cccccc;white-space:pre">            <span style="color:#dcdcaa">print</span><span style="color:#ffd700">(</span><span style="color:#ce9178">&quot;Invalid selection. Please choose a valid option.&quot;</span><span style="color:#ffd700">)</span></div>
<div class="m" style="position:absolute;left:0;width:64.00px;text-align:right;top:1611.19px;font-family:'Liberation Mono';font-size:20.400px;line-height:20.400px;letter-spacing:-0.322px;color:#6e7681;white-space:pre">96</div>
<div class="m" style="position:absolute;left:0;width:64.00px;text-align:right;top:1640.63px;font-family:'Liberation Mono';font-size:20.400px;line-height:20.400px;letter-spacing:-0.322px;color:#6e7681;white-space:pre">97</div>
<div style="position:absolute;left:72.00px;top:927.20px;width:4.00px;height:117.76px;background:#2ea043;"></div>
<div style="position:absolute;left:72px;top:1074.40px;width:4px;height:29.44px;background:repeating-linear-gradient(-45deg,#0078d4 0px,#0078d4 1.5px,transparent 1.5px,transparent 3px)"></div>
<div style="position:absolute;left:72px;top:1133.28px;width:4px;height:29.44px;background:repeating-linear-gradient(-45deg,#0078d4 0px,#0078d4 1.5px,transparent 1.5px,transparent 3px)"></div>
<div style="position:absolute;left:72px;top:1192.16px;width:4px;height:323.84px;background:repeating-linear-gradient(-45deg,#0078d4 0px,#0078d4 1.5px,transparent 1.5px,transparent 3px)"></div>
<div style="position:absolute;left:105.00px;top:1644.00px;width:665.00px;height:17.00px;background:#2e2e2e;"></div>
</div>
<div style="position:absolute;left:0.00px;top:84.00px;width:992.00px;height:29.44px;background:#1f1f1f;"></div>
<div style="position:absolute;left:0;top:112.84px;width:992px;height:5px;background:linear-gradient(#000000,#000000 35%,rgba(0,0,0,0.35) 65%,rgba(0,0,0,0))"></div>
<div class="m" style="position:absolute;left:0;width:64.00px;text-align:right;top:90.87px;font-family:'Liberation Mono';font-size:20.400px;line-height:20.400px;letter-spacing:-0.322px;color:#6e7681">8</div>
<div class="m" style="position:absolute;left:105.00px;top:90.87px;font-family:'Liberation Mono';font-size:20.400px;line-height:20.400px;letter-spacing:-0.322px;color:#cccccc;white-space:pre"><span style="color:#569cd6">def</span> <span style="color:#dcdcaa">main</span><span style="color:#ffd700">(</span><span style="color:#ffd700">)</span><span style="color:#cccccc">:</span></div>
<div style="position:absolute;left:0.00px;top:49.00px;width:992.00px;height:35.00px;background:#1f1f1f;"></div>
<div style="position:absolute;left:24.50px;top:57.54px;font-family:'Liberation Sans';font-weight:normal;font-size:20.50px;line-height:20.50px;letter-spacing:0.000px;color:#a9a9a9;white-space:pre;transform:scaleX(0.9405);transform-origin:0 0;">scripts</div>
<div style="position:absolute;left:140.90px;top:57.54px;font-family:'Liberation Sans';font-weight:normal;font-size:20.50px;line-height:20.50px;letter-spacing:0.000px;color:#a9a9a9;white-space:pre;transform:scaleX(0.9489);transform-origin:0 0;">main.py</div>
<div style="position:absolute;left:264.60px;top:57.54px;font-family:'Liberation Sans';font-weight:normal;font-size:20.50px;line-height:20.50px;letter-spacing:0.000px;color:#a9a9a9;white-space:pre;transform:scaleX(0.9563);transform-origin:0 0;">main</div>
<div style="position:absolute;left:0.00px;top:0.00px;width:1092.00px;height:50.40px;background:#181818;"></div>
<div style="position:absolute;left:0.00px;top:49.10px;width:1092.00px;height:1.40px;background:#2b2b2b;"></div>
<div style="position:absolute;left:0.00px;top:0.00px;width:187.00px;height:50.50px;background:#1f1f1f;"></div>
<div style="position:absolute;left:186.80px;top:0.00px;width:1.30px;height:49.50px;background:#2b2b2b;"></div>
<div style="position:absolute;left:396.00px;top:0.00px;width:1.30px;height:49.50px;background:#2b2b2b;"></div>
<div style="position:absolute;left:608.00px;top:0.00px;width:1.30px;height:49.50px;background:#2b2b2b;"></div>
<div style="position:absolute;left:49.00px;top:13.64px;font-family:'Liberation Sans';font-weight:normal;font-size:20.50px;line-height:20.50px;letter-spacing:0.000px;color:#e2c08d;white-space:pre;transform:scaleX(0.9614);transform-origin:0 0;">main.py</div>
<div style="position:absolute;left:127.00px;top:15.25px;font-family:'Liberation Sans';font-weight:bold;font-size:18.60px;line-height:18.60px;letter-spacing:0.000px;color:#c4ae88;white-space:pre;transform:scaleX(0.9681);transform-origin:0 0;">M</div>
<div style="position:absolute;left:237.20px;top:13.64px;font-family:'Liberation Sans';font-weight:normal;font-size:20.50px;line-height:20.50px;letter-spacing:0.000px;color:#e2c08d;white-space:pre;transform:scaleX(0.9568);transform-origin:0 0;">queries.py</div>
<div style="position:absolute;left:336.00px;top:15.25px;font-family:'Liberation Sans';font-weight:bold;font-size:18.60px;line-height:18.60px;letter-spacing:0.000px;color:#c4ae88;white-space:pre;transform:scaleX(0.9939);transform-origin:0 0;">M</div>
<div style="position:absolute;left:446.10px;top:13.64px;font-family:'Liberation Sans';font-weight:normal;font-size:20.50px;line-height:20.50px;letter-spacing:0.000px;color:#e2c08d;white-space:pre;transform:scaleX(0.9591);transform-origin:0 0;">db_utils.py</div>
<div style="position:absolute;left:548.40px;top:15.25px;font-family:'Liberation Sans';font-weight:bold;font-size:18.60px;line-height:18.60px;letter-spacing:0.000px;color:#c4ae88;white-space:pre;transform:scaleX(1.0262);transform-origin:0 0;">M</div>
<div style="position:absolute;left:989.5px;top:84px;width:3px;height:1661px;background:linear-gradient(90deg,rgba(0,0,0,0),rgba(0,0,0,0.55))"></div>
<svg style="position:absolute;left:0;top:0;width:2048px;height:1745px;pointer-events:none;filter:blur(0.35px)" viewBox="0 0 2048 1745"><rect x="994" y="156.80" width="76" height="100.80" fill="#ffffff" fill-opacity="0.02"/><rect x="1000" y="160.40" width="69" height="1.80" fill="#ffffff" fill-opacity="0.12"/><rect x="1000" y="165.80" width="69" height="1.80" fill="#ffffff" fill-opacity="0.12"/><rect x="1000" y="171.20" width="69" height="1.80" fill="#ffffff" fill-opacity="0.12"/><rect x="1000" y="174.80" width="69" height="1.80" fill="#ffffff" fill-opacity="0.12"/><rect x="1000" y="178.40" width="69" height="1.80" fill="#ffffff" fill-opacity="0.12"/><rect x="1000" y="182.00" width="69" height="1.80" fill="#ffffff" fill-opacity="0.12"/><rect x="1000" y="185.60" width="69" height="1.80" fill="#ffffff" fill-opacity="0.12"/><rect x="1000" y="189.20" width="69" height="1.80" fill="#ffffff" fill-opacity="0.12"/><rect x="1000" y="192.80" width="69" height="1.80" fill="#ffffff" fill-opacity="0.12"/><rect x="1000" y="196.40" width="69" height="1.80" fill="#ffffff" fill-opacity="0.12"/><rect x="1000" y="200.00" width="69" height="1.80" fill="#ffffff" fill-opacity="0.12"/><rect x="1000" y="203.60" width="69" height="1.80" fill="#ffffff" fill-opacity="0.12"/><rect x="1000" y="207.20" width="69" height="1.80" fill="#ffffff" fill-opacity="0.12"/><rect x="1000" y="210.80" width="69" height="1.80" fill="#ffffff" fill-opacity="0.12"/><rect x="1000" y="218.00" width="69" height="1.80" fill="#ffffff" fill-opacity="0.12"/><rect x="1000" y="221.60" width="69" height="1.80" fill="#ffffff" fill-opacity="0.12"/><rect x="1000" y="225.20" width="69" height="1.80" fill="#ffffff" fill-opacity="0.12"/><rect x="1000" y="228.80" width="69" height="1.80" fill="#ffffff" fill-opacity="0.12"/><rect x="1000" y="232.40" width="69" height="1.80" fill="#ffffff" fill-opacity="0.12"/><rect x="1000" y="236.00" width="69" height="1.80" fill="#ffffff" fill-opacity="0.12"/><rect x="1000" y="239.60" width="69" height="1.80" fill="#ffffff" fill-opacity="0.12"/><rect x="1000" y="243.20" width="69" height="1.80" fill="#ffffff" fill-opacity="0.12"/><rect x="1000" y="246.80" width="69" height="1.80" fill="#ffffff" fill-opacity="0.12"/><rect x="999.50" y="83.20" width="3.44" height="1.3" fill="#c586c0" fill-opacity="0.5"/><rect x="1003.80" y="83.20" width="6.02" height="1.3" fill="#9cdcfe" fill-opacity="0.5"/><rect x="1010.68" y="83.20" width="5.16" height="1.3" fill="#c586c0" fill-opacity="0.5"/><rect x="1016.70" y="83.20" width="22.36" height="1.3" fill="#9cdcfe" fill-opacity="0.5"/><rect x="1039.06" y="83.20" width="0.86" height="1.3" fill="#cccccc" fill-opacity="0.5"/><rect x="1040.78" y="83.20" width="25.80" height="1.3" fill="#9cdcfe" fill-opacity="0.5"/><rect x="1066.58" y="83.20" width="0.86" height="1.3" fill="#cccccc" fill-opacity="0.5"/><rect x="1068.30" y="83.20" width="0.70" height="1.3" fill="#9cdcfe" fill-opacity="0.5"/><rect x="999.50" y="85.00" width="3.44" height="1.3" fill="#c586c0" fill-opacity="0.5"/><rect x="1003.80" y="85.00" width="6.88" height="1.3" fill="#9cdcfe" fill-opacity="0.5"/><rect x="1011.54" y="85.00" width="5.16" height="1.3" fill="#c586c0" fill-opacity="0.5"/><rect x="1017.56" y="85.00" width="12.04" height="1.3" fill="#9cdcfe" fill-opacity="0.5"/><rect x="1029.60" y="85.00" width="0.86" height="1.3" fill="#cccccc" fill-opacity="0.5"/><rect x="1031.32" y="85.00" width="24.08" height="1.3" fill="#9cdcfe" fill-opacity="0.5"/><rect x="1055.40" y="85.00" width="0.86" height="1.3" fill="#cccccc" fill-opacity="0.5"/><rect x="1057.12" y="85.00" width="6.02" height="1.3" fill="#9cdcfe" fill-opacity="0.5"/><rect x="1063.14" y="85.00" width="0.86" height="1.3" fill="#cccccc" fill-opacity="0.5"/><rect x="1064.86" y="85.00" width="4.14" height="1.3" fill="#9cdcfe" fill-opacity="0.5"/><rect x="999.50" y="86.80" width="5.16" height="1.3" fill="#c586c0" fill-opacity="0.5"/><rect x="1005.52" y="86.80" width="5.16" height="1.3" fill="#9cdcfe" fill-opacity="0.5"/><rect x="1011.54" y="86.80" width="1.72" height="1.3" fill="#9cdcfe" fill-opacity="0.5"/><rect x="1014.12" y="86.80" width="1.72" height="1.3" fill="#9cdcfe" fill-opacity="0.5"/><rect x="999.50" y="90.40" width="6.02" height="1.3" fill="#9cdcfe" fill-opacity="0.5"/><rect x="1006.38" y="90.40" width="0.86" height="1.3" fill="#cccccc" fill-opacity="0.5"/><rect x="1008.10" y="90.40" width="18.92" height="1.3" fill="#ce9178" fill-opacity="0.5"/><rect x="999.50" y="92.20" width="9.46" height="1.3" fill="#9cdcfe" fill-opacity="0.5"/><rect x="1009.82" y="92.20" width="0.86" height="1.3" fill="#cccccc" fill-opacity="0.5"/><rect x="1011.54" y="92.20" width="0.86" height="1.3" fill="#ffd700" fill-opacity="0.5"/><rect x="1012.40" y="92.20" width="10.32" height="1.3" fill="#ce9178" fill-opacity="0.5"/><rect x="1022.72" y="92.20" width="0.86" height="1.3" fill="#cccccc" fill-opacity="0.5"/><rect x="1024.44" y="92.20" width="10.32" height="1.3" fill="#ce9178" fill-opacity="0.5"/><rect x="1034.76" y="92.20" width="0.86" height="1.3" fill="#ffd700" fill-opacity="0.5"/><rect x="999.50" y="95.80" width="2.58" height="1.3" fill="#569cd6" fill-opacity="0.5"/><rect x="1002.94" y="95.80" width="3.44" height="1.3" fill="#dcdcaa" fill-opacity="0.5"/><rect x="1006.38" y="95.80" width="0.86" height="1.3" fill="#ffd700" fill-opacity="0.5"/><rect x="1007.24" y="95.80" width="0.86" height="1.3" fill="#ffd700" fill-opacity="0.5"/><rect x="1008.10" y="95.80" width="0.86" height="1.3" fill="#cccccc" fill-opacity="0.5"/><rect x="1002.94" y="97.60" width="6.02" height="1.3" fill="#dcdcaa" fill-opacity="0.5"/><rect x="1008.96" y="97.60" width="0.86" height="1.3" fill="#ffd700" fill-opacity="0.5"/><rect x="1009.82" y="97.60" width="6.02" height="1.3" fill="#9cdcfe" fill-opacity="0.5"/><rect x="1015.84" y="97.60" width="0.86" height="1.3" fill="#ffd700" fill-opacity="0.5"/><rect x="1002.94" y="99.40" width="4.30" height="1.3" fill="#dcdcaa" fill-opacity="0.5"/><rect x="1007.24" y="99.40" width="0.86" height="1.3" fill="#ffd700" fill-opacity="0.5"/><rect x="1008.10" y="99.40" width="30.96" height="1.3" fill="#ce9178" fill-opacity="0.5"/><rect x="1039.06" y="99.40" width="0.86" height="1.3" fill="#ffd700" fill-opacity="0.5"/><rect x="1002.94" y="101.20" width="5.16" height="1.3" fill="#9cdcfe" fill-opacity="0.5"/><rect x="1008.96" y="101.20" width="0.86" height="1.3" fill="#cccccc" fill-opacity="0.5"/><rect x="1010.68" y="101.20" width="7.74" height="1.3" fill="#ce9178" fill-opacity="0.5"/><rect x="1002.94" y="103.00" width="5.16" height="1.3" fill="#9cdcfe" fill-opacity="0.5"/><rect x="1008.96" y="103.00" width="0.86" height="1.3" fill="#cccccc" fill-opacity="0.5"/><rect x="1010.68" y="103.00" width="7.74" height="1.3" fill="#ce9178" fill-opacity="0.5"/><rect x="1002.94" y="106.60" width="4.30" height="1.3" fill="#c586c0" fill-opacity="0.5"/><rect x="1008.10" y="106.60" width="3.44" height="1.3" fill="#569cd6" fill-opacity="0.5"/><rect x="1011.54" y="106.60" width="0.86" height="1.3" fill="#cccccc" fill-opacity="0.5"/><rect x="1006.38" y="108.40" width="4.30" height="1.3" fill="#dcdcaa" fill-opacity="0.5"/><rect x="1010.68" y="108.40" width="0.86" height="1.3" fill="#ffd700" fill-opacity="0.5"/><rect x="1011.54" y="108.40" width="0.86" height="1.3" fill="#ce9178" fill-opacity="0.5"/><rect x="1012.40" y="108.40" width="1.72" height="1.3" fill="#d7ba7d" fill-opacity="0.5"/><rect x="1014.12" y="108.40" width="21.50" height="1.3" fill="#ce9178" fill-opacity="0.5"/><rect x="1035.62" y="108.40" width="0.86" height="1.3" fill="#ffd700" fill-opacity="0.5"/><rect x="1006.38" y="110.20" width="4.30" height="1.3" fill="#dcdcaa" fill-opacity="0.5"/><rect x="1010.68" y="110.20" width="0.86" height="1.3" fill="#ffd700" fill-opacity="0.5"/><rect x="1011.54" y="110.20" width="28.38" height="1.3" fill="#ce9178" fill-opacity="0.5"/><rect x="1039.92" y="110.20" width="0.86" height="1.3" fill="#ffd700" fill-opacity="0.5"/><rect x="1006.38" y="112.00" width="4.30" height="1.3" fill="#dcdcaa" fill-opacity="0.5"/><rect x="1010.68" y="112.00" width="0.86" height="1.3" fill="#ffd700" fill-opacity="0.5"/><rect x="1011.54" y="112.00" width="29.24" height="1.3" fill="#ce9178" fill-opacity="0.5"/><rect x="1040.78" y="112.00" width="0.86" height="1.3" fill="#ffd700" fill-opacity="0.5"/><rect x="1006.38" y="113.80" width="4.30" height="1.3" fill="#dcdcaa" fill-opacity="0.5"/><rect x="1010.68" y="113.80" width="0.86" height="1.3" fill="#ffd700" fill-opacity="0.5"/><rect x="1011.54" y="113.80" width="30.10" height="1.3" fill="#ce9178" fill-opacity="0.5"/><rect x="1041.64" y="113.80" width="0.86" height="1.3" fill="#ffd700" fill-opacity="0.5"/><rect x="1006.38" y="115.60" width="4.30" height="1.3" fill="#dcdcaa" fill-opacity="0.5"/><rect x="1010.68" y="115.60" width="0.86" height="1.3" fill="#ffd700" fill-opacity="0.5"/><rect x="1011.54" y="115.60" width="24.08" height="1.3" fill="#ce9178" fill-opacity="0.5"/><rect x="1035.62" y="115.60" width="0.86" height="1.3" fill="#ffd700" fill-opacity="0.5"/><rect x="1006.38" y="117.40" width="4.30" height="1.3" fill="#dcdcaa" fill-opacity="0.5"/><rect x="1010.68" y="117.40" width="0.86" height="1.3" fill="#ffd700" fill-opacity="0.5"/><rect x="1011.54" y="117.40" width="24.94" height="1.3" fill="#ce9178" fill-opacity="0.5"/><rect x="1036.48" y="117.40" width="0.86" height="1.3" fill="#ffd700" fill-opacity="0.5"/><rect x="1006.38" y="119.20" width="4.30" height="1.3" fill="#dcdcaa" fill-opacity="0.5"/><rect x="1010.68" y="119.20" width="0.86" height="1.3" fill="#ffd700" fill-opacity="0.5"/><rect x="1011.54" y="119.20" width="33.54" height="1.3" fill="#ce9178" fill-opacity="0.5"/><rect x="1045.08" y="119.20" width="0.86" height="1.3" fill="#ffd700" fill-opacity="0.5"/><rect x="1006.38" y="121.00" width="4.30" height="1.3" fill="#dcdcaa" fill-opacity="0.5"/><rect x="1010.68" y="121.00" width="0.86" height="1.3" fill="#ffd700" fill-opacity="0.5"/><rect x="1011.54" y="121.00" width="34.40" height="1.3" fill="#ce9178" fill-opacity="0.5"/><rect x="1045.94" y="121.00" width="0.86" height="1.3" fill="#ffd700" fill-opacity="0.5"/><rect x="1006.38" y="122.80" width="4.30" height="1.3" fill="#dcdcaa" fill-opacity="0.5"/><rect x="1010.68" y="122.80" width="0.86" height="1.3" fill="#ffd700" fill-opacity="0.5"/><rect x="1011.54" y="122.80" width="35.26" height="1.3" fill="#ce9178" fill-opacity="0.5"/><rect x="1046.80" y="122.80" width="0.86" height="1.3" fill="#ffd700" fill-opacity="0.5"/><rect x="1006.38" y="124.60" width="4.30" height="1.3" fill="#dcdcaa" fill-opacity="0.5"/><rect x="1010.68" y="124.60" width="0.86" height="1.3" fill="#ffd700" fill-opacity="0.5"/><rect x="1011.54" y="124.60" width="24.94" height="1.3" fill="#ce9178" fill-opacity="0.5"/><rect x="1036.48" y="124.60" width="0.86" height="1.3" fill="#ffd700" fill-opacity="0.5"/><rect x="1006.38" y="126.40" width="4.30" height="1.3" fill="#dcdcaa" fill-opacity="0.5"/><rect x="1010.68" y="126.40" width="0.86" height="1.3" fill="#ffd700" fill-opacity="0.5"/><rect x="1011.54" y="126.40" width="28.38" height="1.3" fill="#ce9178" fill-opacity="0.5"/><rect x="1039.92" y="126.40" width="0.86" height="1.3" fill="#ffd700" fill-opacity="0.5"/><rect x="1006.38" y="128.20" width="4.30" height="1.3" fill="#dcdcaa" fill-opacity="0.5"/><rect x="1010.68" y="128.20" width="0.86" height="1.3" fill="#ffd700" fill-opacity="0.5"/><rect x="1011.54" y="128.20" width="32.68" height="1.3" fill="#ce9178" fill-opacity="0.5"/><rect x="1044.22" y="128.20" width="0.86" height="1.3" fill="#ffd700" fill-opacity="0.5"/><rect x="1006.38" y="130.00" width="4.30" height="1.3" fill="#dcdcaa" fill-opacity="0.5"/><rect x="1010.68" y="130.00" width="0.86" height="1.3" fill="#ffd700" fill-opacity="0.5"/><rect x="1011.54" y="130.00" width="42.14" height="1.3" fill="#ce9178" fill-opacity="0.5"/><rect x="1053.68" y="130.00" width="0.86" height="1.3" fill="#ffd700" fill-opacity="0.5"/><rect x="1006.38" y="131.80" width="4.30" height="1.3" fill="#dcdcaa" fill-opacity="0.5"/><rect x="1010.68" y="131.80" width="0.86" height="1.3" fill="#ffd700" fill-opacity="0.5"/><rect x="1011.54" y="131.80" width="47.30" height="1.3" fill="#ce9178" fill-opacity="0.5"/><rect x="1058.84" y="131.80" width="0.86" height="1.3" fill="#ffd700" fill-opacity="0.5"/><rect x="1006.38" y="133.60" width="4.30" height="1.3" fill="#dcdcaa" fill-opacity="0.5"/><rect x="1010.68" y="133.60" width="0.86" height="1.3" fill="#ffd700" fill-opacity="0.5"/><rect x="1011.54" y="133.60" width="44.72" height="1.3" fill="#ce9178" fill-opacity="0.5"/><rect x="1056.26" y="133.60" width="0.86" height="1.3" fill="#ffd700" fill-opacity="0.5"/><rect x="1006.38" y="135.40" width="4.30" height="1.3" fill="#dcdcaa" fill-opacity="0.5"/><rect x="1010.68" y="135.40" width="0.86" height="1.3" fill="#ffd700" fill-opacity="0.5"/><rect x="1011.54" y="135.40" width="39.56" height="1.3" fill="#ce9178" fill-opacity="0.5"/><rect x="1051.10" y="135.40" width="0.86" height="1.3" fill="#ffd700" fill-opacity="0.5"/><rect x="1006.38" y="137.20" width="4.30" height="1.3" fill="#dcdcaa" fill-opacity="0.5"/><rect x="1010.68" y="137.20" width="0.86" height="1.3" fill="#ffd700" fill-opacity="0.5"/><rect x="1011.54" y="137.20" width="48.16" height="1.3" fill="#ce9178" fill-opacity="0.5"/><rect x="1059.70" y="137.20" width="0.86" height="1.3" fill="#ffd700" fill-opacity="0.5"/><rect x="1006.38" y="139.00" width="4.30" height="1.3" fill="#dcdcaa" fill-opacity="0.5"/><rect x="1010.68" y="139.00" width="0.86" height="1.3" fill="#ffd700" fill-opacity="0.5"/><rect x="1011.54" y="139.00" width="42.14" height="1.3" fill="#ce9178" fill-opacity="0.5"/><rect x="1053.68" y="139.00" width="0.86" height="1.3" fill="#ffd700" fill-opacity="0.5"/><rect x="1006.38" y="140.80" width="4.30" height="1.3" fill="#dcdcaa" fill-opacity="0.5"/><rect x="1010.68" y="140.80" width="0.86" height="1.3" fill="#ffd700" fill-opacity="0.5"/><rect x="1011.54" y="140.80" width="24.08" height="1.3" fill="#ce9178" fill-opacity="0.5"/><rect x="1035.62" y="140.80" width="0.86" height="1.3" fill="#ffd700" fill-opacity="0.5"/><rect x="1006.38" y="142.60" width="4.30" height="1.3" fill="#dcdcaa" fill-opacity="0.5"/><rect x="1010.68" y="142.60" width="0.86" height="1.3" fill="#ffd700" fill-opacity="0.5"/><rect x="1011.54" y="142.60" width="28.38" height="1.3" fill="#ce9178" fill-opacity="0.5"/><rect x="1039.92" y="142.60" width="0.86" height="1.3" fill="#ffd700" fill-opacity="0.5"/><rect x="1006.38" y="144.40" width="4.30" height="1.3" fill="#dcdcaa" fill-opacity="0.5"/><rect x="1010.68" y="144.40" width="0.86" height="1.3" fill="#ffd700" fill-opacity="0.5"/><rect x="1011.54" y="144.40" width="36.12" height="1.3" fill="#ce9178" fill-opacity="0.5"/><rect x="1047.66" y="144.40" width="0.86" height="1.3" fill="#ffd700" fill-opacity="0.5"/><rect x="1006.38" y="146.20" width="4.30" height="1.3" fill="#dcdcaa" fill-opacity="0.5"/><rect x="1010.68" y="146.20" width="0.86" height="1.3" fill="#ffd700" fill-opacity="0.5"/><rect x="1011.54" y="146.20" width="41.28" height="1.3" fill="#ce9178" fill-opacity="0.5"/><rect x="1052.82" y="146.20" width="0.86" height="1.3" fill="#ffd700" fill-opacity="0.5"/><rect x="1006.38" y="148.00" width="4.30" height="1.3" fill="#dcdcaa" fill-opacity="0.5"/><rect x="1010.68" y="148.00" width="0.86" height="1.3" fill="#ffd700" fill-opacity="0.5"/><rect x="1011.54" y="148.00" width="8.60" height="1.3" fill="#ce9178" fill-opacity="0.5"/><rect x="1020.14" y="148.00" width="0.86" height="1.3" fill="#ffd700" fill-opacity="0.5"/><rect x="1006.38" y="158.80" width="4.30" height="1.3" fill="#dcdcaa" fill-opacity="0.5"/><rect x="1010.68" y="158.80" width="0.86" height="1.3" fill="#ffd700" fill-opacity="0.5"/><rect x="1011.54" y="158.80" width="0.86" height="1.3" fill="#ffd700" fill-opacity="0.5"/><rect x="1006.38" y="160.40" width="5.16" height="1.80" fill="#264f78"/><rect x="1006.38" y="160.60" width="5.16" height="1.3" fill="#9cdcfe" fill-opacity="0.5"/><rect x="1012.40" y="160.60" width="0.86" height="1.3" fill="#cccccc" fill-opacity="0.5"/><rect x="1014.12" y="160.60" width="4.30" height="1.3" fill="#dcdcaa" fill-opacity="0.5"/><rect x="1018.42" y="160.60" width="0.86" height="1.3" fill="#ffd700" fill-opacity="0.5"/><rect x="1019.28" y="160.60" width="43.86" height="1.3" fill="#ce9178" fill-opacity="0.5"/><rect x="1063.14" y="160.60" width="1.72" height="1.3" fill="#d7ba7d" fill-opacity="0.5"/><rect x="1064.86" y="160.60" width="0.86" height="1.3" fill="#ce9178" fill-opacity="0.5"/><rect x="1065.72" y="160.60" width="0.86" height="1.3" fill="#ffd700" fill-opacity="0.5"/><rect x="1006.38" y="162.40" width="4.30" height="1.3" fill="#dcdcaa" fill-opacity="0.5"/><rect x="1010.68" y="162.40" width="0.86" height="1.3" fill="#ffd700" fill-opacity="0.5"/><rect x="1011.54" y="162.40" width="0.86" height="1.3" fill="#ffd700" fill-opacity="0.5"/><rect x="1006.38" y="166.00" width="1.72" height="1.3" fill="#c586c0" fill-opacity="0.5"/><rect x="1008.96" y="166.00" width="5.16" height="1.3" fill="#9cdcfe" fill-opacity="0.5"/><rect x="1014.98" y="166.00" width="0.86" height="1.3" fill="#cccccc" fill-opacity="0.5"/><rect x="1015.84" y="166.00" width="0.86" height="1.3" fill="#cccccc" fill-opacity="0.5"/><rect x="1017.56" y="166.00" width="2.58" height="1.3" fill="#ce9178" fill-opacity="0.5"/><rect x="1020.14" y="166.00" width="0.86" height="1.3" fill="#cccccc" fill-opacity="0.5"/><rect x="1009.82" y="167.80" width="6.88" height="1.3" fill="#9cdcfe" fill-opacity="0.5"/><rect x="1017.56" y="167.80" width="0.86" height="1.3" fill="#cccccc" fill-opacity="0.5"/><rect x="1019.28" y="167.80" width="4.30" height="1.3" fill="#dcdcaa" fill-opacity="0.5"/><rect x="1023.58" y="167.80" width="0.86" height="1.3" fill="#ffd700" fill-opacity="0.5"/><rect x="1024.44" y="167.80" width="30.96" height="1.3" fill="#ce9178" fill-opacity="0.5"/><rect x="1055.40" y="167.80" width="0.86" height="1.3" fill="#ffd700" fill-opacity="0.5"/><rect x="1009.82" y="169.60" width="12.04" height="1.3" fill="#dcdcaa" fill-opacity="0.5"/><rect x="1021.86" y="169.60" width="0.86" height="1.3" fill="#ffd700" fill-opacity="0.5"/><rect x="1022.72" y="169.60" width="6.88" height="1.3" fill="#9cdcfe" fill-opacity="0.5"/><rect x="1029.60" y="169.60" width="0.86" height="1.3" fill="#cccccc" fill-opacity="0.5"/><rect x="1031.32" y="169.60" width="6.02" height="1.3" fill="#9cdcfe" fill-opacity="0.5"/><rect x="1037.34" y="169.60" width="0.86" height="1.3" fill="#ffd700" fill-opacity="0.5"/><rect x="1006.38" y="171.40" width="3.44" height="1.3" fill="#c586c0" fill-opacity="0.5"/><rect x="1010.68" y="171.40" width="5.16" height="1.3" fill="#9cdcfe" fill-opacity="0.5"/><rect x="1016.70" y="171.40" width="0.86" height="1.3" fill="#cccccc" fill-opacity="0.5"/><rect x="1017.56" y="171.40" width="0.86" height="1.3" fill="#cccccc" fill-opacity="0.5"/><rect x="1019.28" y="171.40" width="2.58" height="1.3" fill="#ce9178" fill-opacity="0.5"/><rect x="1021.86" y="171.40" width="0.86" height="1.3" fill="#cccccc" fill-opacity="0.5"/><rect x="1009.82" y="173.20" width="24.08" height="1.3" fill="#dcdcaa" fill-opacity="0.5"/><rect x="1033.90" y="173.20" width="0.86" height="1.3" fill="#ffd700" fill-opacity="0.5"/><rect x="1034.76" y="173.20" width="6.02" height="1.3" fill="#9cdcfe" fill-opacity="0.5"/><rect x="1040.78" y="173.20" width="0.86" height="1.3" fill="#ffd700" fill-opacity="0.5"/><rect x="1006.38" y="175.00" width="3.44" height="1.3" fill="#c586c0" fill-opacity="0.5"/><rect x="1010.68" y="175.00" width="5.16" height="1.3" fill="#9cdcfe" fill-opacity="0.5"/><rect x="1016.70" y="175.00" width="0.86" height="1.3" fill="#cccccc" fill-opacity="0.5"/><rect x="1017.56" y="175.00" width="0.86" height="1.3" fill="#cccccc" fill-opacity="0.5"/><rect x="1019.28" y="175.00" width="2.58" height="1.3" fill="#ce9178" fill-opacity="0.5"/><rect x="1021.86" y="175.00" width="0.86" height="1.3" fill="#cccccc" fill-opacity="0.5"/><rect x="1009.82" y="176.80" width="22.36" height="1.3" fill="#dcdcaa" fill-opacity="0.5"/><rect x="1032.18" y="176.80" width="0.86" height="1.3" fill="#ffd700" fill-opacity="0.5"/><rect x="1033.04" y="176.80" width="6.02" height="1.3" fill="#9cdcfe" fill-opacity="0.5"/><rect x="1039.06" y="176.80" width="0.86" height="1.3" fill="#cccccc" fill-opacity="0.5"/><rect x="1040.78" y="176.80" width="9.46" height="1.3" fill="#9cdcfe" fill-opacity="0.5"/><rect x="1050.24" y="176.80" width="0.86" height="1.3" fill="#ffd700" fill-opacity="0.5"/><rect x="1006.38" y="178.60" width="3.44" height="1.3" fill="#c586c0" fill-opacity="0.5"/><rect x="1010.68" y="178.60" width="5.16" height="1.3" fill="#9cdcfe" fill-opacity="0.5"/><rect x="1016.70" y="178.60" width="0.86" height="1.3" fill="#cccccc" fill-opacity="0.5"/><rect x="1017.56" y="178.60" width="0.86" height="1.3" fill="#cccccc" fill-opacity="0.5"/><rect x="1019.28" y="178.60" width="2.58" height="1.3" fill="#ce9178" fill-opacity="0.5"/><rect x="1021.86" y="178.60" width="0.86" height="1.3" fill="#cccccc" fill-opacity="0.5"/><rect x="1009.82" y="180.40" width="25.80" height="1.3" fill="#dcdcaa" fill-opacity="0.5"/><rect x="1035.62" y="180.40" width="0.86" height="1.3" fill="#ffd700" fill-opacity="0.5"/><rect x="1036.48" y="180.40" width="6.02" height="1.3" fill="#9cdcfe" fill-opacity="0.5"/><rect x="1042.50" y="180.40" width="0.86" height="1.3" fill="#cccccc" fill-opacity="0.5"/><rect x="1044.22" y="180.40" width="5.16" height="1.3" fill="#9cdcfe" fill-opacity="0.5"/><rect x="1049.38" y="180.40" width="0.86" height="1.3" fill="#cccccc" fill-opacity="0.5"/><rect x="1051.10" y="180.40" width="5.16" height="1.3" fill="#9cdcfe" fill-opacity="0.5"/><rect x="1056.26" y="180.40" width="0.86" height="1.3" fill="#ffd700" fill-opacity="0.5"/><rect x="1006.38" y="182.20" width="3.44" height="1.3" fill="#c586c0" fill-opacity="0.5"/><rect x="1010.68" y="182.20" width="5.16" height="1.3" fill="#9cdcfe" fill-opacity="0.5"/><rect x="1016.70" y="182.20" width="0.86" height="1.3" fill="#cccccc" fill-opacity="0.5"/><rect x="1017.56" y="182.20" width="0.86" height="1.3" fill="#cccccc" fill-opacity="0.5"/><rect x="1019.28" y="182.20" width="2.58" height="1.3" fill="#ce9178" fill-opacity="0.5"/><rect x="1021.86" y="182.20" width="0.86" height="1.3" fill="#cccccc" fill-opacity="0.5"/><rect x="1009.82" y="184.00" width="26.66" height="1.3" fill="#dcdcaa" fill-opacity="0.5"/><rect x="1036.48" y="184.00" width="0.86" height="1.3" fill="#ffd700" fill-opacity="0.5"/><rect x="1037.34" y="184.00" width="6.02" height="1.3" fill="#9cdcfe" fill-opacity="0.5"/><rect x="1043.36" y="184.00" width="0.86" height="1.3" fill="#cccccc" fill-opacity="0.5"/><rect x="1045.08" y="184.00" width="9.46" height="1.3" fill="#9cdcfe" fill-opacity="0.5"/><rect x="1054.54" y="184.00" width="0.86" height="1.3" fill="#cccccc" fill-opacity="0.5"/><rect x="1056.26" y="184.00" width="5.16" height="1.3" fill="#9cdcfe" fill-opacity="0.5"/><rect x="1061.42" y="184.00" width="0.86" height="1.3" fill="#cccccc" fill-opacity="0.5"/><rect x="1063.14" y="184.00" width="5.16" height="1.3" fill="#9cdcfe" fill-opacity="0.5"/><rect x="1068.30" y="184.00" width="0.70" height="1.3" fill="#ffd700" fill-opacity="0.5"/><rect x="1006.38" y="185.80" width="3.44" height="1.3" fill="#c586c0" fill-opacity="0.5"/><rect x="1010.68" y="185.80" width="5.16" height="1.3" fill="#9cdcfe" fill-opacity="0.5"/><rect x="1016.70" y="185.80" width="0.86" height="1.3" fill="#cccccc" fill-opacity="0.5"/><rect x="1017.56" y="185.80" width="0.86" height="1.3" fill="#cccccc" fill-opacity="0.5"/><rect x="1019.28" y="185.80" width="2.58" height="1.3" fill="#ce9178" fill-opacity="0.5"/><rect x="1021.86" y="185.80" width="0.86" height="1.3" fill="#cccccc" fill-opacity="0.5"/><rect x="1009.82" y="187.60" width="17.20" height="1.3" fill="#dcdcaa" fill-opacity="0.5"/><rect x="1027.02" y="187.60" width="0.86" height="1.3" fill="#ffd700" fill-opacity="0.5"/><rect x="1027.88" y="187.60" width="6.02" height="1.3" fill="#9cdcfe" fill-opacity="0.5"/><rect x="1033.90" y="187.60" width="0.86" height="1.3" fill="#cccccc" fill-opacity="0.5"/><rect x="1035.62" y="187.60" width="5.16" height="1.3" fill="#9cdcfe" fill-opacity="0.5"/><rect x="1040.78" y="187.60" width="0.86" height="1.3" fill="#cccccc" fill-opacity="0.5"/><rect x="1042.50" y="187.60" width="5.16" height="1.3" fill="#9cdcfe" fill-opacity="0.5"/><rect x="1047.66" y="187.60" width="0.86" height="1.3" fill="#ffd700" fill-opacity="0.5"/><rect x="1006.38" y="189.40" width="3.44" height="1.3" fill="#c586c0" fill-opacity="0.5"/><rect x="1010.68" y="189.40" width="5.16" height="1.3" fill="#9cdcfe" fill-opacity="0.5"/><rect x="1016.70" y="189.40" width="0.86" height="1.3" fill="#cccccc" fill-opacity="0.5"/><rect x="1017.56" y="189.40" width="0.86" height="1.3" fill="#cccccc" fill-opacity="0.5"/><rect x="1019.28" y="189.40" width="2.58" height="1.3" fill="#ce9178" fill-opacity="0.5"/><rect x="1021.86" y="189.40" width="0.86" height="1.3" fill="#cccccc" fill-opacity="0.5"/><rect x="1009.82" y="191.20" width="25.80" height="1.3" fill="#dcdcaa" fill-opacity="0.5"/><rect x="1035.62" y="191.20" width="0.86" height="1.3" fill="#ffd700" fill-opacity="0.5"/><rect x="1036.48" y="191.20" width="6.02" height="1.3" fill="#9cdcfe" fill-opacity="0.5"/><rect x="1042.50" y="191.20" width="0.86" height="1.3" fill="#ffd700" fill-opacity="0.5"/><rect x="1006.38" y="193.00" width="3.44" height="1.3" fill="#c586c0" fill-opacity="0.5"/><rect x="1010.68" y="193.00" width="5.16" height="1.3" fill="#9cdcfe" fill-opacity="0.5"/><rect x="1016.70" y="193.00" width="0.86" height="1.3" fill="#cccccc" fill-opacity="0.5"/><rect x="1017.56" y="193.00" width="0.86" height="1.3" fill="#cccccc" fill-opacity="0.5"/><rect x="1019.28" y="193.00" width="2.58" height="1.3" fill="#ce9178" fill-opacity="0.5"/><rect x="1021.86" y="193.00" width="0.86" height="1.3" fill="#cccccc" fill-opacity="0.5"/><rect x="1009.82" y="194.80" width="26.66" height="1.3" fill="#dcdcaa" fill-opacity="0.5"/><rect x="1036.48" y="194.80" width="0.86" height="1.3" fill="#ffd700" fill-opacity="0.5"/><rect x="1037.34" y="194.80" width="6.02" height="1.3" fill="#9cdcfe" fill-opacity="0.5"/><rect x="1043.36" y="194.80" width="0.86" height="1.3" fill="#cccccc" fill-opacity="0.5"/><rect x="1045.08" y="194.80" width="10.32" height="1.3" fill="#9cdcfe" fill-opacity="0.5"/><rect x="1055.40" y="194.80" width="0.86" height="1.3" fill="#cccccc" fill-opacity="0.5"/><rect x="1056.26" y="194.80" width="9.46" height="1.3" fill="#9cdcfe" fill-opacity="0.5"/><rect x="1065.72" y="194.80" width="0.86" height="1.3" fill="#ffd700" fill-opacity="0.5"/><rect x="1006.38" y="196.60" width="3.44" height="1.3" fill="#c586c0" fill-opacity="0.5"/><rect x="1010.68" y="196.60" width="5.16" height="1.3" fill="#9cdcfe" fill-opacity="0.5"/><rect x="1016.70" y="196.60" width="0.86" height="1.3" fill="#cccccc" fill-opacity="0.5"/><rect x="1017.56" y="196.60" width="0.86" height="1.3" fill="#cccccc" fill-opacity="0.5"/><rect x="1019.28" y="196.60" width="2.58" height="1.3" fill="#ce9178" fill-opacity="0.5"/><rect x="1021.86" y="196.60" width="0.86" height="1.3" fill="#cccccc" fill-opacity="0.5"/><rect x="1009.82" y="198.40" width="15.48" height="1.3" fill="#dcdcaa" fill-opacity="0.5"/><rect x="1025.30" y="198.40" width="0.86" height="1.3" fill="#ffd700" fill-opacity="0.5"/><rect x="1026.16" y="198.40" width="6.02" height="1.3" fill="#9cdcfe" fill-opacity="0.5"/><rect x="1032.18" y="198.40" width="0.86" height="1.3" fill="#cccccc" fill-opacity="0.5"/><rect x="1033.90" y="198.40" width="5.16" height="1.3" fill="#9cdcfe" fill-opacity="0.5"/><rect x="1039.06" y="198.40" width="0.86" height="1.3" fill="#cccccc" fill-opacity="0.5"/><rect x="1040.78" y="198.40" width="5.16" height="1.3" fill="#9cdcfe" fill-opacity="0.5"/><rect x="1045.94" y="198.40" width="0.86" height="1.3" fill="#ffd700" fill-opacity="0.5"/><rect x="1006.38" y="200.20" width="3.44" height="1.3" fill="#c586c0" fill-opacity="0.5"/><rect x="1010.68" y="200.20" width="5.16" height="1.3" fill="#9cdcfe" fill-opacity="0.5"/><rect x="1015.84" y="200.20" width="0.86" height="1.3" fill="#cccccc" fill-opacity="0.5"/><rect x="1016.70" y="200.20" width="0.86" height="1.3" fill="#cccccc" fill-opacity="0.5"/><rect x="1017.56" y="200.20" width="3.44" height="1.3" fill="#ce9178" fill-opacity="0.5"/><rect x="1021.00" y="200.20" width="0.86" height="1.3" fill="#cccccc" fill-opacity="0.5"/><rect x="1009.82" y="202.00" width="21.50" height="1.3" fill="#dcdcaa" fill-opacity="0.5"/><rect x="1031.32" y="202.00" width="0.86" height="1.3" fill="#ffd700" fill-opacity="0.5"/><rect x="1032.18" y="202.00" width="6.02" height="1.3" fill="#9cdcfe" fill-opacity="0.5"/><rect x="1038.20" y="202.00" width="0.86" height="1.3" fill="#cccccc" fill-opacity="0.5"/><rect x="1039.92" y="202.00" width="5.16" height="1.3" fill="#9cdcfe" fill-opacity="0.5"/><rect x="1045.08" y="202.00" width="0.86" height="1.3" fill="#cccccc" fill-opacity="0.5"/><rect x="1046.80" y="202.00" width="5.16" height="1.3" fill="#9cdcfe" fill-opacity="0.5"/><rect x="1051.96" y="202.00" width="0.86" height="1.3" fill="#ffd700" fill-opacity="0.5"/><rect x="1006.38" y="203.80" width="3.44" height="1.3" fill="#c586c0" fill-opacity="0.5"/><rect x="1010.68" y="203.80" width="5.16" height="1.3" fill="#9cdcfe" fill-opacity="0.5"/><rect x="1016.70" y="203.80" width="0.86" height="1.3" fill="#cccccc" fill-opacity="0.5"/><rect x="1017.56" y="203.80" width="0.86" height="1.3" fill="#cccccc" fill-opacity="0.5"/><rect x="1019.28" y="203.80" width="3.44" height="1.3" fill="#ce9178" fill-opacity="0.5"/><rect x="1022.72" y="203.80" width="0.86" height="1.3" fill="#cccccc" fill-opacity="0.5"/><rect x="1009.82" y="205.60" width="23.22" height="1.3" fill="#dcdcaa" fill-opacity="0.5"/><rect x="1033.04" y="205.60" width="0.86" height="1.3" fill="#ffd700" fill-opacity="0.5"/><rect x="1033.90" y="205.60" width="6.02" height="1.3" fill="#9cdcfe" fill-opacity="0.5"/><rect x="1039.92" y="205.60" width="0.86" height="1.3" fill="#cccccc" fill-opacity="0.5"/><rect x="1041.64" y="205.60" width="10.32" height="1.3" fill="#9cdcfe" fill-opacity="0.5"/><rect x="1051.96" y="205.60" width="0.86" height="1.3" fill="#cccccc" fill-opacity="0.5"/><rect x="1052.82" y="205.60" width="9.46" height="1.3" fill="#9cdcfe" fill-opacity="0.5"/><rect x="1062.28" y="205.60" width="0.86" height="1.3" fill="#ffd700" fill-opacity="0.5"/><rect x="1006.38" y="207.40" width="3.44" height="1.3" fill="#c586c0" fill-opacity="0.5"/><rect x="1010.68" y="207.40" width="5.16" height="1.3" fill="#9cdcfe" fill-opacity="0.5"/><rect x="1016.70" y="207.40" width="0.86" height="1.3" fill="#cccccc" fill-opacity="0.5"/><rect x="1017.56" y="207.40" width="0.86" height="1.3" fill="#cccccc" fill-opacity="0.5"/><rect x="1019.28" y="207.40" width="3.44" height="1.3" fill="#ce9178" fill-opacity="0.5"/><rect x="1022.72" y="207.40" width="0.86" height="1.3" fill="#cccccc" fill-opacity="0.5"/><rect x="1009.82" y="209.20" width="25.80" height="1.3" fill="#dcdcaa" fill-opacity="0.5"/><rect x="1035.62" y="209.20" width="0.86" height="1.3" fill="#ffd700" fill-opacity="0.5"/><rect x="1036.48" y="209.20" width="6.02" height="1.3" fill="#9cdcfe" fill-opacity="0.5"/><rect x="1042.50" y="209.20" width="0.86" height="1.3" fill="#ffd700" fill-opacity="0.5"/><rect x="1006.38" y="211.00" width="3.44" height="1.3" fill="#c586c0" fill-opacity="0.5"/><rect x="1010.68" y="211.00" width="5.16" height="1.3" fill="#9cdcfe" fill-opacity="0.5"/><rect x="1016.70" y="211.00" width="0.86" height="1.3" fill="#cccccc" fill-opacity="0.5"/><rect x="1017.56" y="211.00" width="0.86" height="1.3" fill="#cccccc" fill-opacity="0.5"/><rect x="1019.28" y="211.00" width="3.44" height="1.3" fill="#ce9178" fill-opacity="0.5"/><rect x="1022.72" y="211.00" width="0.86" height="1.3" fill="#cccccc" fill-opacity="0.5"/><rect x="1009.82" y="212.80" width="6.88" height="1.3" fill="#9cdcfe" fill-opacity="0.5"/><rect x="1017.56" y="212.80" width="0.86" height="1.3" fill="#cccccc" fill-opacity="0.5"/><rect x="1019.28" y="212.80" width="4.30" height="1.3" fill="#dcdcaa" fill-opacity="0.5"/><rect x="1023.58" y="212.80" width="0.86" height="1.3" fill="#ffd700" fill-opacity="0.5"/><rect x="1024.44" y="212.80" width="44.56" height="1.3" fill="#ce9178" fill-opacity="0.5"/><rect x="1009.82" y="214.60" width="6.88" height="1.3" fill="#9cdcfe" fill-opacity="0.5"/><rect x="1017.56" y="214.60" width="0.86" height="1.3" fill="#cccccc" fill-opacity="0.5"/><rect x="1019.28" y="214.60" width="2.58" height="1.3" fill="#4ec9b0" fill-opacity="0.5"/><rect x="1021.86" y="214.60" width="0.86" height="1.3" fill="#ffd700" fill-opacity="0.5"/><rect x="1022.72" y="214.60" width="6.88" height="1.3" fill="#9cdcfe" fill-opacity="0.5"/><rect x="1029.60" y="214.60" width="0.86" height="1.3" fill="#ffd700" fill-opacity="0.5"/><rect x="1031.32" y="214.60" width="1.72" height="1.3" fill="#c586c0" fill-opacity="0.5"/><rect x="1033.90" y="214.60" width="6.88" height="1.3" fill="#9cdcfe" fill-opacity="0.5"/><rect x="1040.78" y="214.60" width="0.86" height="1.3" fill="#cccccc" fill-opacity="0.5"/><rect x="1041.64" y="214.60" width="6.02" height="1.3" fill="#dcdcaa" fill-opacity="0.5"/><rect x="1047.66" y="214.60" width="0.86" height="1.3" fill="#ffd700" fill-opacity="0.5"/><rect x="1048.52" y="214.60" width="0.86" height="1.3" fill="#ffd700" fill-opacity="0.5"/><rect x="1050.24" y="214.60" width="2.58" height="1.3" fill="#569cd6" fill-opacity="0.5"/><rect x="1053.68" y="214.60" width="0.86" height="1.3" fill="#b5cea8" fill-opacity="0.5"/><rect x="1055.40" y="214.60" width="0.86" height="1.3" fill="#cccccc" fill-opacity="0.5"/><rect x="1056.26" y="214.60" width="0.86" height="1.3" fill="#cccccc" fill-opacity="0.5"/><rect x="1057.98" y="214.60" width="2.58" height="1.3" fill="#4ec9b0" fill-opacity="0.5"/><rect x="1060.56" y="214.60" width="0.86" height="1.3" fill="#ffd700" fill-opacity="0.5"/><rect x="1061.42" y="214.60" width="6.88" height="1.3" fill="#9cdcfe" fill-opacity="0.5"/><rect x="1068.30" y="214.60" width="0.70" height="1.3" fill="#ffd700" fill-opacity="0.5"/><rect x="1009.82" y="216.40" width="28.38" height="1.3" fill="#dcdcaa" fill-opacity="0.5"/><rect x="1038.20" y="216.40" width="0.86" height="1.3" fill="#ffd700" fill-opacity="0.5"/><rect x="1039.06" y="216.40" width="6.02" height="1.3" fill="#9cdcfe" fill-opacity="0.5"/><rect x="1045.08" y="216.40" width="0.86" height="1.3" fill="#cccccc" fill-opacity="0.5"/><rect x="1046.80" y="216.40" width="6.88" height="1.3" fill="#9cdcfe" fill-opacity="0.5"/><rect x="1053.68" y="216.40" width="0.86" height="1.3" fill="#cccccc" fill-opacity="0.5"/><rect x="1054.54" y="216.40" width="6.88" height="1.3" fill="#9cdcfe" fill-opacity="0.5"/><rect x="1061.42" y="216.40" width="0.86" height="1.3" fill="#ffd700" fill-opacity="0.5"/><rect x="1006.38" y="218.20" width="3.44" height="1.3" fill="#c586c0" fill-opacity="0.5"/><rect x="1010.68" y="218.20" width="5.16" height="1.3" fill="#9cdcfe" fill-opacity="0.5"/><rect x="1016.70" y="218.20" width="0.86" height="1.3" fill="#cccccc" fill-opacity="0.5"/><rect x="1017.56" y="218.20" width="0.86" height="1.3" fill="#cccccc" fill-opacity="0.5"/><rect x="1019.28" y="218.20" width="3.44" height="1.3" fill="#ce9178" fill-opacity="0.5"/><rect x="1022.72" y="218.20" width="0.86" height="1.3" fill="#cccccc" fill-opacity="0.5"/><rect x="1009.82" y="220.00" width="14.62" height="1.3" fill="#dcdcaa" fill-opacity="0.5"/><rect x="1024.44" y="220.00" width="0.86" height="1.3" fill="#ffd700" fill-opacity="0.5"/><rect x="1025.30" y="220.00" width="6.02" height="1.3" fill="#9cdcfe" fill-opacity="0.5"/><rect x="1031.32" y="220.00" width="0.86" height="1.3" fill="#ffd700" fill-opacity="0.5"/><rect x="1006.38" y="221.80" width="3.44" height="1.3" fill="#c586c0" fill-opacity="0.5"/><rect x="1010.68" y="221.80" width="5.16" height="1.3" fill="#9cdcfe" fill-opacity="0.5"/><rect x="1016.70" y="221.80" width="0.86" height="1.3" fill="#cccccc" fill-opacity="0.5"/><rect x="1017.56" y="221.80" width="0.86" height="1.3" fill="#cccccc" fill-opacity="0.5"/><rect x="1019.28" y="221.80" width="3.44" height="1.3" fill="#ce9178" fill-opacity="0.5"/><rect x="1022.72" y="221.80" width="0.86" height="1.3" fill="#cccccc" fill-opacity="0.5"/><rect x="1009.82" y="223.60" width="19.78" height="1.3" fill="#dcdcaa" fill-opacity="0.5"/><rect x="1029.60" y="223.60" width="0.86" height="1.3" fill="#ffd700" fill-opacity="0.5"/><rect x="1030.46" y="223.60" width="6.02" height="1.3" fill="#9cdcfe" fill-opacity="0.5"/><rect x="1036.48" y="223.60" width="0.86" height="1.3" fill="#ffd700" fill-opacity="0.5"/><rect x="1006.38" y="225.40" width="3.44" height="1.3" fill="#c586c0" fill-opacity="0.5"/><rect x="1010.68" y="225.40" width="5.16" height="1.3" fill="#9cdcfe" fill-opacity="0.5"/><rect x="1015.84" y="225.40" width="0.86" height="1.3" fill="#cccccc" fill-opacity="0.5"/><rect x="1016.70" y="225.40" width="0.86" height="1.3" fill="#cccccc" fill-opacity="0.5"/><rect x="1017.56" y="225.40" width="3.44" height="1.3" fill="#ce9178" fill-opacity="0.5"/><rect x="1021.00" y="225.40" width="0.86" height="1.3" fill="#cccccc" fill-opacity="0.5"/><rect x="1009.82" y="227.20" width="32.68" height="1.3" fill="#dcdcaa" fill-opacity="0.5"/><rect x="1042.50" y="227.20" width="0.86" height="1.3" fill="#ffd700" fill-opacity="0.5"/><rect x="1043.36" y="227.20" width="6.02" height="1.3" fill="#9cdcfe" fill-opacity="0.5"/><rect x="1049.38" y="227.20" width="0.86" height="1.3" fill="#ffd700" fill-opacity="0.5"/><rect x="1006.38" y="229.00" width="3.44" height="1.3" fill="#c586c0" fill-opacity="0.5"/><rect x="1010.68" y="229.00" width="5.16" height="1.3" fill="#9cdcfe" fill-opacity="0.5"/><rect x="1015.84" y="229.00" width="0.86" height="1.3" fill="#cccccc" fill-opacity="0.5"/><rect x="1016.70" y="229.00" width="0.86" height="1.3" fill="#cccccc" fill-opacity="0.5"/><rect x="1017.56" y="229.00" width="3.44" height="1.3" fill="#ce9178" fill-opacity="0.5"/><rect x="1021.00" y="229.00" width="0.86" height="1.3" fill="#cccccc" fill-opacity="0.5"/><rect x="1009.82" y="230.80" width="35.26" height="1.3" fill="#dcdcaa" fill-opacity="0.5"/><rect x="1045.08" y="230.80" width="0.86" height="1.3" fill="#ffd700" fill-opacity="0.5"/><rect x="1045.94" y="230.80" width="6.02" height="1.3" fill="#9cdcfe" fill-opacity="0.5"/><rect x="1051.96" y="230.80" width="0.86" height="1.3" fill="#ffd700" fill-opacity="0.5"/><rect x="1006.38" y="232.60" width="3.44" height="1.3" fill="#c586c0" fill-opacity="0.5"/><rect x="1010.68" y="232.60" width="5.16" height="1.3" fill="#9cdcfe" fill-opacity="0.5"/><rect x="1015.84" y="232.60" width="0.86" height="1.3" fill="#cccccc" fill-opacity="0.5"/><rect x="1016.70" y="232.60" width="0.86" height="1.3" fill="#cccccc" fill-opacity="0.5"/><rect x="1017.56" y="232.60" width="3.44" height="1.3" fill="#ce9178" fill-opacity="0.5"/><rect x="1021.00" y="232.60" width="0.86" height="1.3" fill="#cccccc" fill-opacity="0.5"/><rect x="1009.82" y="234.40" width="22.36" height="1.3" fill="#dcdcaa" fill-opacity="0.5"/><rect x="1032.18" y="234.40" width="0.86" height="1.3" fill="#ffd700" fill-opacity="0.5"/><rect x="1033.04" y="234.40" width="6.02" height="1.3" fill="#9cdcfe" fill-opacity="0.5"/><rect x="1039.06" y="234.40" width="0.86" height="1.3" fill="#ffd700" fill-opacity="0.5"/><rect x="1006.38" y="236.20" width="3.44" height="1.3" fill="#c586c0" fill-opacity="0.5"/><rect x="1010.68" y="236.20" width="5.16" height="1.3" fill="#9cdcfe" fill-opacity="0.5"/><rect x="1015.84" y="236.20" width="0.86" height="1.3" fill="#cccccc" fill-opacity="0.5"/><rect x="1016.70" y="236.20" width="0.86" height="1.3" fill="#cccccc" fill-opacity="0.5"/><rect x="1017.56" y="236.20" width="3.44" height="1.3" fill="#ce9178" fill-opacity="0.5"/><rect x="1021.00" y="236.20" width="0.86" height="1.3" fill="#cccccc" fill-opacity="0.5"/><rect x="1009.82" y="238.00" width="26.66" height="1.3" fill="#dcdcaa" fill-opacity="0.5"/><rect x="1036.48" y="238.00" width="0.86" height="1.3" fill="#ffd700" fill-opacity="0.5"/><rect x="1037.34" y="238.00" width="6.02" height="1.3" fill="#9cdcfe" fill-opacity="0.5"/><rect x="1043.36" y="238.00" width="0.86" height="1.3" fill="#ffd700" fill-opacity="0.5"/><rect x="1006.38" y="239.80" width="3.44" height="1.3" fill="#c586c0" fill-opacity="0.5"/><rect x="1010.68" y="239.80" width="5.16" height="1.3" fill="#9cdcfe" fill-opacity="0.5"/><rect x="1015.84" y="239.80" width="0.86" height="1.3" fill="#cccccc" fill-opacity="0.5"/><rect x="1016.70" y="239.80" width="0.86" height="1.3" fill="#cccccc" fill-opacity="0.5"/><rect x="1017.56" y="239.80" width="3.44" height="1.3" fill="#ce9178" fill-opacity="0.5"/><rect x="1021.00" y="239.80" width="0.86" height="1.3" fill="#cccccc" fill-opacity="0.5"/><rect x="1009.82" y="241.60" width="24.94" height="1.3" fill="#dcdcaa" fill-opacity="0.5"/><rect x="1034.76" y="241.60" width="0.86" height="1.3" fill="#ffd700" fill-opacity="0.5"/><rect x="1035.62" y="241.60" width="6.02" height="1.3" fill="#9cdcfe" fill-opacity="0.5"/><rect x="1041.64" y="241.60" width="0.86" height="1.3" fill="#ffd700" fill-opacity="0.5"/><rect x="1042.50" y="241.60" width="0.86" height="1.3" fill="#cccccc" fill-opacity="0.5"/><rect x="1006.38" y="243.40" width="3.44" height="1.3" fill="#c586c0" fill-opacity="0.5"/><rect x="1010.68" y="243.40" width="5.16" height="1.3" fill="#9cdcfe" fill-opacity="0.5"/><rect x="1015.84" y="243.40" width="0.86" height="1.3" fill="#cccccc" fill-opacity="0.5"/><rect x="1016.70" y="243.40" width="0.86" height="1.3" fill="#cccccc" fill-opacity="0.5"/><rect x="1017.56" y="243.40" width="3.44" height="1.3" fill="#ce9178" fill-opacity="0.5"/><rect x="1021.00" y="243.40" width="0.86" height="1.3" fill="#cccccc" fill-opacity="0.5"/><rect x="1009.82" y="245.20" width="32.68" height="1.3" fill="#dcdcaa" fill-opacity="0.5"/><rect x="1042.50" y="245.20" width="0.86" height="1.3" fill="#ffd700" fill-opacity="0.5"/><rect x="1043.36" y="245.20" width="6.02" height="1.3" fill="#9cdcfe" fill-opacity="0.5"/><rect x="1049.38" y="245.20" width="0.86" height="1.3" fill="#ffd700" fill-opacity="0.5"/><rect x="1006.38" y="247.00" width="3.44" height="1.3" fill="#c586c0" fill-opacity="0.5"/><rect x="1010.68" y="247.00" width="5.16" height="1.3" fill="#9cdcfe" fill-opacity="0.5"/><rect x="1016.70" y="247.00" width="0.86" height="1.3" fill="#cccccc" fill-opacity="0.5"/><rect x="1017.56" y="247.00" width="0.86" height="1.3" fill="#cccccc" fill-opacity="0.5"/><rect x="1019.28" y="247.00" width="3.44" height="1.3" fill="#ce9178" fill-opacity="0.5"/><rect x="1022.72" y="247.00" width="0.86" height="1.3" fill="#cccccc" fill-opacity="0.5"/><rect x="1009.82" y="248.80" width="4.30" height="1.3" fill="#c586c0" fill-opacity="0.5"/><rect x="1006.38" y="250.60" width="3.44" height="1.3" fill="#c586c0" fill-opacity="0.5"/><rect x="1009.82" y="250.60" width="0.86" height="1.3" fill="#cccccc" fill-opacity="0.5"/><rect x="1009.82" y="252.40" width="4.30" height="1.3" fill="#dcdcaa" fill-opacity="0.5"/><rect x="1014.12" y="252.40" width="0.86" height="1.3" fill="#ffd700" fill-opacity="0.5"/><rect x="1014.98" y="252.40" width="43.00" height="1.3" fill="#ce9178" fill-opacity="0.5"/><rect x="1057.98" y="252.40" width="0.86" height="1.3" fill="#ffd700" fill-opacity="0.5"/><rect x="999.50" y="257.80" width="1.72" height="1.3" fill="#c586c0" fill-opacity="0.5"/><rect x="1002.08" y="257.80" width="6.88" height="1.3" fill="#9cdcfe" fill-opacity="0.5"/><rect x="1009.82" y="257.80" width="0.86" height="1.3" fill="#cccccc" fill-opacity="0.5"/><rect x="1010.68" y="257.80" width="0.86" height="1.3" fill="#cccccc" fill-opacity="0.5"/><rect x="1012.40" y="257.80" width="8.60" height="1.3" fill="#ce9178" fill-opacity="0.5"/><rect x="1021.00" y="257.80" width="0.86" height="1.3" fill="#cccccc" fill-opacity="0.5"/><rect x="1002.94" y="259.60" width="3.44" height="1.3" fill="#dcdcaa" fill-opacity="0.5"/><rect x="1006.38" y="259.60" width="0.86" height="1.3" fill="#ffd700" fill-opacity="0.5"/><rect x="1007.24" y="259.60" width="0.86" height="1.3" fill="#ffd700" fill-opacity="0.5"/><rect x="993.5" y="83.00" width="2.5" height="1.80" fill="#0078d4"/><rect x="993.5" y="90.20" width="2.5" height="3.60" fill="#0078d4"/><rect x="993.5" y="101.00" width="2.5" height="3.60" fill="#0078d4"/><rect x="993.5" y="129.80" width="2.5" height="18.00" fill="#0078d4"/><rect x="993.5" y="212.60" width="2.5" height="7.20" fill="#2ea043"/><rect x="993.5" y="221.60" width="2.5" height="1.80" fill="#0078d4"/><rect x="993.5" y="225.20" width="2.5" height="1.80" fill="#0078d4"/><rect x="993.5" y="228.80" width="2.5" height="19.80" fill="#0078d4"/></svg>
<svg style="position:absolute;left:0;top:0;width:2048px;height:1745px;pointer-events:none" viewBox="0 0 2048 1745"><rect x="1070" y="84" width="1" height="1661" fill="#161616"/><rect x="1070.5" y="517.4" width="22" height="602.6" fill="#2c2c2c"/><rect x="1070.8" y="85.50" width="6.6" height="10.66" fill="#1b6fc0"/><rect x="1070.8" y="128.14" width="6.6" height="21.32" fill="#1b6fc0"/><rect x="1070.8" y="192.10" width="6.6" height="21.32" fill="#1b6fc0"/><rect x="1070.8" y="362.66" width="6.6" height="106.60" fill="#1b6fc0"/><rect x="1070.8" y="853.02" width="6.6" height="42.64" fill="#2ea043"/><rect x="1070.8" y="906.32" width="6.6" height="10.66" fill="#1b6fc0"/><rect x="1070.8" y="927.64" width="6.6" height="10.66" fill="#1b6fc0"/><rect x="1070.8" y="948.96" width="6.6" height="117.26" fill="#1b6fc0"/><rect x="1076.6" y="543.91" width="9" height="10.6" fill="#9b86b5"/><rect x="1076.6" y="575.89" width="9" height="10.6" fill="#8a8a8a"/><rect x="1076.6" y="607.87" width="9" height="10.6" fill="#8a8a8a"/><rect x="1076.6" y="629.19" width="9" height="10.6" fill="#8a8a8a"/><rect x="1076.6" y="650.51" width="9" height="10.6" fill="#8a8a8a"/><rect x="1076.6" y="671.83" width="9" height="10.6" fill="#8a8a8a"/><rect x="1076.6" y="693.15" width="9" height="10.6" fill="#8a8a8a"/><rect x="1076.6" y="714.47" width="9" height="10.6" fill="#8a8a8a"/><rect x="1076.6" y="735.79" width="9" height="10.6" fill="#8a8a8a"/><rect x="1076.6" y="757.11" width="9" height="10.6" fill="#8a8a8a"/><rect x="1076.6" y="778.43" width="9" height="10.6" fill="#8a8a8a"/><rect x="1076.6" y="799.75" width="9" height="10.6" fill="#8a8a8a"/><rect x="1076.6" y="821.07" width="9" height="10.6" fill="#8a8a8a"/><rect x="1076.6" y="842.39" width="9" height="10.6" fill="#8a8a8a"/><rect x="1076.6" y="885.03" width="9" height="10.6" fill="#8a8a8a"/><rect x="1076.6" y="906.35" width="9" height="10.6" fill="#8a8a8a"/><rect x="1076.6" y="927.67" width="9" height="10.6" fill="#8a8a8a"/><rect x="1076.6" y="948.99" width="9" height="10.6" fill="#8a8a8a"/><rect x="1076.6" y="970.31" width="9" height="10.6" fill="#8a8a8a"/><rect x="1076.6" y="991.63" width="9" height="10.6" fill="#8a8a8a"/><rect x="1076.6" y="1012.95" width="9" height="10.6" fill="#8a8a8a"/><rect x="1076.6" y="1034.27" width="9" height="10.6" fill="#8a8a8a"/><rect x="1076.6" y="1055.59" width="9" height="10.6" fill="#8a8a8a"/><rect x="1070" y="1056" width="22" height="2" fill="#a0a0a0"/></svg>
<div style="position:absolute;left:1092.00px;top:0.00px;width:956.00px;height:1745.00px;background:#181818;"></div>
<div style="position:absolute;left:1092.00px;top:0.00px;width:1.00px;height:1745.00px;background:#2b2b2b;"></div>
<div style="position:absolute;left:1123.60px;top:14.68px;font-family:'Liberation Sans';font-weight:normal;font-size:16.80px;line-height:16.80px;letter-spacing:0.000px;color:#9d9d9d;white-space:pre;transform:scaleX(0.8805);transform-origin:0 0;">PROBLEMS</div>
<div style="position:absolute;left:1243.50px;top:14.68px;font-family:'Liberation Sans';font-weight:normal;font-size:16.80px;line-height:16.80px;letter-spacing:0.000px;color:#9d9d9d;white-space:pre;transform:scaleX(0.9194);transform-origin:0 0;">OUTPUT</div>
<div style="position:absolute;left:1345.40px;top:14.68px;font-family:'Liberation Sans';font-weight:normal;font-size:16.80px;line-height:16.80px;letter-spacing:0.000px;color:#9d9d9d;white-space:pre;transform:scaleX(0.8993);transform-origin:0 0;">DEBUG CONSOLE</div>
<div style="position:absolute;left:1515.20px;top:14.68px;font-family:'Liberation Sans';font-weight:normal;font-size:16.80px;line-height:16.80px;letter-spacing:0.000px;color:#e7e7e7;white-space:pre;transform:scaleX(0.9254);transform-origin:0 0;">TERMINAL</div>
<div style="position:absolute;left:1631.40px;top:14.68px;font-family:'Liberation Sans';font-weight:normal;font-size:16.80px;line-height:16.80px;letter-spacing:0.000px;color:#9d9d9d;white-space:pre;transform:scaleX(0.8459);transform-origin:0 0;">PORTS</div>
<div style="position:absolute;left:1511.60px;top:39.20px;width:86.70px;height:1.40px;background:#1a73c4;"></div>
<div style="position:absolute;left:1093.00px;top:50.00px;width:955.00px;height:68.00px;background:#2b2b2b;"></div>
<div style="position:absolute;left:1123.70px;top:59.93px;font-family:'Liberation Sans';font-weight:bold;font-size:16.50px;line-height:16.50px;letter-spacing:0.011px;color:#cccccc;white-space:pre;">CONTINUE: CONTINUE</div>
<div style="position:absolute;left:1123.70px;top:93.93px;font-family:'Liberation Sans';font-weight:bold;font-size:16.50px;line-height:16.50px;letter-spacing:0.080px;color:#cccccc;white-space:pre;">TERMINAL</div>
<div class="m" style="position:absolute;left:1123.00px;top:212.42px;font-family:'Liberation Mono';font-size:20.600px;line-height:20.600px;letter-spacing:-0.802px;color:#cccccc;white-space:pre">Database initialized successfully.</div>
<div class="m" style="position:absolute;left:1123.00px;top:292.10px;font-family:'Liberation Mono';font-size:20.600px;line-height:20.600px;letter-spacing:-0.802px;color:#cccccc;white-space:pre">Select an operation:</div>
<div class="m" style="position:absolute;left:1123.00px;top:345.22px;font-family:'Liberation Mono';font-size:20.600px;line-height:20.600px;letter-spacing:-0.802px;color:#cccccc;white-space:pre">1. Add new data to the database</div>
<div class="m" style="position:absolute;left:1123.00px;top:371.78px;font-family:'Liberation Mono';font-size:20.600px;line-height:20.600px;letter-spacing:-0.802px;color:#cccccc;white-space:pre">2. Update authors for blank rows</div>
<div class="m" style="position:absolute;left:1123.00px;top:398.34px;font-family:'Liberation Mono';font-size:20.600px;line-height:20.600px;letter-spacing:-0.802px;color:#cccccc;white-space:pre">3. Print author portfolio traffic</div>
<div class="m" style="position:absolute;left:1123.00px;top:424.90px;font-family:'Liberation Mono';font-size:20.600px;line-height:20.600px;letter-spacing:-0.802px;color:#cccccc;white-space:pre">4. Print localized traffic</div>
<div class="m" style="position:absolute;left:1123.00px;top:451.46px;font-family:'Liberation Mono';font-size:20.600px;line-height:20.600px;letter-spacing:-0.802px;color:#cccccc;white-space:pre">5. Print freelancer traffic</div>
<div class="m" style="position:absolute;left:1123.00px;top:478.02px;font-family:'Liberation Mono';font-size:20.600px;line-height:20.600px;letter-spacing:-0.802px;color:#cccccc;white-space:pre">6. Print top 10 click changes by page</div>
<div class="m" style="position:absolute;left:1123.00px;top:504.58px;font-family:'Liberation Mono';font-size:20.600px;line-height:20.600px;letter-spacing:-0.802px;color:#cccccc;white-space:pre">7. Plot localized traffic clicks query</div>
<div class="m" style="position:absolute;left:1123.00px;top:531.14px;font-family:'Liberation Mono';font-size:20.600px;line-height:20.600px;letter-spacing:-0.802px;color:#cccccc;white-space:pre">8. Plot freelancer traffic clicks query</div>
<div class="m" style="position:absolute;left:1123.00px;top:557.70px;font-family:'Liberation Mono';font-size:20.600px;line-height:20.600px;letter-spacing:-0.802px;color:#cccccc;white-space:pre">9. Print MoM traffic change</div>
<div class="m" style="position:absolute;left:1123.00px;top:584.26px;font-family:'Liberation Mono';font-size:20.600px;line-height:20.600px;letter-spacing:-0.802px;color:#cccccc;white-space:pre">10. Print MoM impression change</div>
<div class="m" style="position:absolute;left:1123.00px;top:610.82px;font-family:'Liberation Mono';font-size:20.600px;line-height:20.600px;letter-spacing:-0.802px;color:#cccccc;white-space:pre">11. Plot author traffic clicks query</div>
<div class="m" style="position:absolute;left:1123.00px;top:637.38px;font-family:'Liberation Mono';font-size:20.600px;line-height:20.600px;letter-spacing:-0.802px;color:#cccccc;white-space:pre">12. Plot and print total clicks and impressions</div>
<div class="m" style="position:absolute;left:1123.00px;top:663.94px;font-family:'Liberation Mono';font-size:20.600px;line-height:20.600px;letter-spacing:-0.802px;color:#cccccc;white-space:pre">13. Plot and print total clicks and impressions by BP</div>
<div class="m" style="position:absolute;left:1123.00px;top:690.50px;font-family:'Liberation Mono';font-size:20.600px;line-height:20.600px;letter-spacing:-0.802px;color:#cccccc;white-space:pre">14. Print articles with the greatest content decay</div>
<div class="m" style="position:absolute;left:1123.00px;top:717.06px;font-family:'Liberation Mono';font-size:20.600px;line-height:20.600px;letter-spacing:-0.802px;color:#cccccc;white-space:pre">15. Show articles that never gained traction</div>
<div class="m" style="position:absolute;left:1123.00px;top:743.62px;font-family:'Liberation Mono';font-size:20.600px;line-height:20.600px;letter-spacing:-0.802px;color:#cccccc;white-space:pre">16. Show articles with greatest traffic loss from peak</div>
<div class="m" style="position:absolute;left:1123.00px;top:770.18px;font-family:'Liberation Mono';font-size:20.600px;line-height:20.600px;letter-spacing:-0.802px;color:#cccccc;white-space:pre">17. Show average clicks/impressions by BP_Score</div>
<div class="m" style="position:absolute;left:1123.00px;top:796.74px;font-family:'Liberation Mono';font-size:20.600px;line-height:20.600px;letter-spacing:-0.802px;color:#cccccc;white-space:pre">18. Show monthly CTR trend</div>
<div class="m" style="position:absolute;left:1123.00px;top:823.30px;font-family:'Liberation Mono';font-size:20.600px;line-height:20.600px;letter-spacing:-0.802px;color:#cccccc;white-space:pre">19. Show average position trend</div>
<div class="m" style="position:absolute;left:1123.00px;top:849.86px;font-family:'Liberation Mono';font-size:20.600px;line-height:20.600px;letter-spacing:-0.802px;color:#cccccc;white-space:pre">20. Plot combined CTR and position trend</div>
<div class="m" style="position:absolute;left:1123.00px;top:876.42px;font-family:'Liberation Mono';font-size:20.600px;line-height:20.600px;letter-spacing:-0.802px;color:#cccccc;white-space:pre">21. Print monthly total clicks and impressions</div>
<div class="m" style="position:absolute;left:1123.00px;top:902.98px;font-family:'Liberation Mono';font-size:20.600px;line-height:20.600px;letter-spacing:-0.802px;color:#cccccc;white-space:pre">22. Exit</div>
<div class="m" style="position:absolute;left:1123.00px;top:956.10px;font-family:'Liberation Mono';font-size:20.600px;line-height:20.600px;letter-spacing:-0.802px;color:#cccccc;white-space:pre">Enter the number of the operation you want to run:</div>
<div style="position:absolute;left:1115px;top:124.4px;width:933px;height:70.3px;overflow:hidden;background:linear-gradient(#303030,#333333 40%,#2e2e2e 75%,#262626)">
<div style="position:absolute;left:25px;top:26px;width:130px;height:34px;background:#3f3c22;filter:blur(10px);border-radius:12px"></div>
<div style="position:absolute;left:135px;top:28px;width:200px;height:30px;background:#3c3a25;filter:blur(10px);border-radius:12px"></div>
<div style="position:absolute;left:215px;top:26px;width:100px;height:26px;background:#413e24;filter:blur(9px);border-radius:12px"></div>
<div style="position:absolute;left:65px;top:6px;width:220px;height:14px;background:#363633;filter:blur(8px);border-radius:12px"></div>
<div style="position:absolute;left:355px;top:10px;width:420px;height:38px;background:#3a3a3a;filter:blur(12px);border-radius:12px"></div>
<div style="position:absolute;left:575px;top:16px;width:140px;height:30px;background:#3f3f3f;filter:blur(10px);border-radius:12px"></div>
<div style="position:absolute;left:800px;top:0px;width:160px;height:38px;background:#3e3c22;filter:blur(10px);border-radius:12px"></div>
<div style="position:absolute;left:815px;top:41px;width:130px;height:20px;background:#393935;filter:blur(8px);border-radius:12px"></div>
</div>
<svg style="position:absolute;left:21.20px;top:13.90px;width:16.20px;height:16.20px;" viewBox="0 0 16 16"><path fill="#5aa2c9" d="M4 2.2Q4 0 6.2 0H9.8Q12 0 12 2.2V6.3Q12 7.5 10.8 7.5H5.9Q4.6 7.5 4.6 8.8V12.6H1.9Q0 12.6 0 10.6V6.4Q0 4.6 1.8 4.6H8.3V3.9H4Z"/><path fill="#5aa2c9" d="M4 2.2Q4 0 6.2 0H9.8Q12 0 12 2.2V6.3Q12 7.5 10.8 7.5H5.9Q4.6 7.5 4.6 8.8V12.6H1.9Q0 12.6 0 10.6V6.4Q0 4.6 1.8 4.6H8.3V3.9H4Z" transform="rotate(180 8 8)"/><circle cx="6.2" cy="1.9" r="0.8" fill="#1f3a4a"/><circle cx="9.8" cy="14.1" r="0.8" fill="#1f3a4a"/></svg>
<svg style="position:absolute;left:209.80px;top:13.90px;width:16.20px;height:16.20px;" viewBox="0 0 16 16"><path fill="#5aa2c9" d="M4 2.2Q4 0 6.2 0H9.8Q12 0 12 2.2V6.3Q12 7.5 10.8 7.5H5.9Q4.6 7.5 4.6 8.8V12.6H1.9Q0 12.6 0 10.6V6.4Q0 4.6 1.8 4.6H8.3V3.9H4Z"/><path fill="#5aa2c9" d="M4 2.2Q4 0 6.2 0H9.8Q12 0 12 2.2V6.3Q12 7.5 10.8 7.5H5.9Q4.6 7.5 4.6 8.8V12.6H1.9Q0 12.6 0 10.6V6.4Q0 4.6 1.8 4.6H8.3V3.9H4Z" transform="rotate(180 8 8)"/><circle cx="6.2" cy="1.9" r="0.8" fill="#1f3a4a"/><circle cx="9.8" cy="14.1" r="0.8" fill="#1f3a4a"/></svg>
<svg style="position:absolute;left:418.60px;top:13.90px;width:16.20px;height:16.20px;" viewBox="0 0 16 16"><path fill="#5aa2c9" d="M4 2.2Q4 0 6.2 0H9.8Q12 0 12 2.2V6.3Q12 7.5 10.8 7.5H5.9Q4.6 7.5 4.6 8.8V12.6H1.9Q0 12.6 0 10.6V6.4Q0 4.6 1.8 4.6H8.3V3.9H4Z"/><path fill="#5aa2c9" d="M4 2.2Q4 0 6.2 0H9.8Q12 0 12 2.2V6.3Q12 7.5 10.8 7.5H5.9Q4.6 7.5 4.6 8.8V12.6H1.9Q0 12.6 0 10.6V6.4Q0 4.6 1.8 4.6H8.3V3.9H4Z" transform="rotate(180 8 8)"/><circle cx="6.2" cy="1.9" r="0.8" fill="#1f3a4a"/><circle cx="9.8" cy="14.1" r="0.8" fill="#1f3a4a"/></svg>
<svg style="position:absolute;left:112.40px;top:59.50px;width:16.20px;height:16.20px;" viewBox="0 0 16 16"><path fill="#5aa2c9" d="M4 2.2Q4 0 6.2 0H9.8Q12 0 12 2.2V6.3Q12 7.5 10.8 7.5H5.9Q4.6 7.5 4.6 8.8V12.6H1.9Q0 12.6 0 10.6V6.4Q0 4.6 1.8 4.6H8.3V3.9H4Z"/><path fill="#5aa2c9" d="M4 2.2Q4 0 6.2 0H9.8Q12 0 12 2.2V6.3Q12 7.5 10.8 7.5H5.9Q4.6 7.5 4.6 8.8V12.6H1.9Q0 12.6 0 10.6V6.4Q0 4.6 1.8 4.6H8.3V3.9H4Z" transform="rotate(180 8 8)"/><circle cx="6.2" cy="1.9" r="0.8" fill="#1f3a4a"/><circle cx="9.8" cy="14.1" r="0.8" fill="#1f3a4a"/></svg>
<svg style="position:absolute;left:157.70px;top:16.10px;width:13.70px;height:13.70px;" viewBox="0 0 14 14"><path d="M0.8 0.8L13.2 13.2M13.2 0.8L0.8 13.2" stroke="#e8e8e8" stroke-width="1.7" fill="none"/></svg>
<svg style="position:absolute;left:89.00px;top:59.00px;width:10.00px;height:16.50px;" viewBox="0 0 10 16.5"><path d="M1.1 1.3L8.5 8.3L1.4 15.2" stroke="#b4b4b4" stroke-width="1.5" fill="none" stroke-linecap="round"/></svg>
<svg style="position:absolute;left:217.80px;top:59.00px;width:10.00px;height:16.50px;" viewBox="0 0 10 16.5"><path d="M1.1 1.3L8.5 8.3L1.4 15.2" stroke="#b4b4b4" stroke-width="1.5" fill="none" stroke-linecap="round"/></svg>
<svg style="position:absolute;left:236.80px;top:56.60px;width:19.00px;height:21.20px;" viewBox="0 0 19 21.2"><path d="M9.5 1L17.8 5.5V15.7L9.5 20.2L1.2 15.7V5.5Z M1.2 5.5L9.5 10.2L17.8 5.5 M9.5 10.2V20.2" stroke="#b48ad9" stroke-width="1.6" fill="none" stroke-linejoin="round"/></svg>
<svg style="position:absolute;left:906.50px;top:14.00px;width:17.00px;height:20.00px;" viewBox="0 0 17 20"><path d="M1.2 1.3L15.8 10L1.2 18.7Z" stroke="#cccccc" stroke-width="1.7" fill="none" stroke-linejoin="round"/></svg>
<svg style="position:absolute;left:934.00px;top:20.00px;width:11.50px;height:6.50px;" viewBox="0 0 11.5 6.5"><path d="M0.6 0.6L5.75 5.7L10.9 0.6" stroke="#cccccc" stroke-width="1.3" fill="none"/></svg>
<svg style="position:absolute;left:964.00px;top:12.00px;width:23.00px;height:24.00px;" viewBox="0 0 23 24"><circle cx="4" cy="4" r="2.9" stroke="#cccccc" stroke-width="1.7" fill="none"/><circle cx="18.5" cy="19.6" r="2.9" stroke="#cccccc" stroke-width="1.7" fill="none"/><path d="M4 7V16Q4 19.6 7.5 19.6H14" stroke="#cccccc" stroke-width="1.7" fill="none"/><path d="M11.5 17L14.2 19.6L11.5 22.2" stroke="#cccccc" stroke-width="1.7" fill="none"/><path d="M18.5 16.7V7.6Q18.5 4 15 4H9" stroke="#cccccc" stroke-width="1.7" fill="none"/><path d="M11.5 1.4L8.8 4L11.5 6.6" stroke="#cccccc" stroke-width="1.7" fill="none"/></svg>
<svg style="position:absolute;left:1006.00px;top:12.00px;width:21.00px;height:21.00px;" viewBox="0 0 21 21"><rect x="0.9" y="0.9" width="19.2" height="19.2" rx="1.6" stroke="#cccccc" stroke-width="1.7" fill="none"/><path d="M10.5 1V20" stroke="#cccccc" stroke-width="1.7"/></svg>
<div style="position:absolute;left:1046.20px;top:21.2px;width:3.2px;height:3.2px;border-radius:50%;background:#cccccc"></div>
<div style="position:absolute;left:1054.30px;top:21.2px;width:3.2px;height:3.2px;border-radius:50%;background:#cccccc"></div>
<div style="position:absolute;left:1062.40px;top:21.2px;width:3.2px;height:3.2px;border-radius:50%;background:#cccccc"></div>
<svg style="position:absolute;left:1104.00px;top:60.00px;width:9.00px;height:15.50px;" viewBox="0 0 9 15.5"><path d="M1 0.8L8 7.75L1 14.7" stroke="#cccccc" stroke-width="1.4" fill="none"/></svg>
<svg style="position:absolute;left:1100.00px;top:97.00px;width:16.00px;height:8.50px;" viewBox="0 0 16 8.5"><path d="M0.8 0.8L8 7.8L15.2 0.8" stroke="#cccccc" stroke-width="1.4" fill="none"/></svg>
</body></html>
